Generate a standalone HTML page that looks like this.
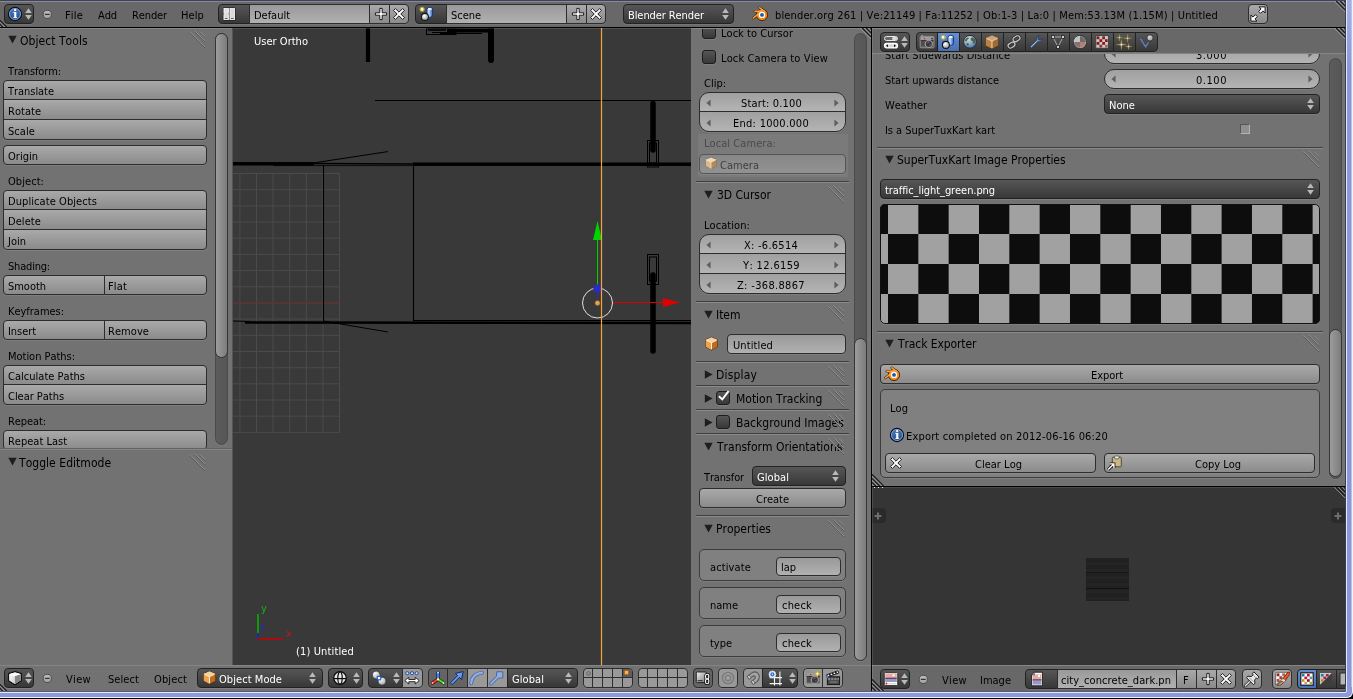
<!DOCTYPE html>
<html><head><meta charset="utf-8"><title>Blender</title>
<style>
html,body{margin:0;padding:0;background:#727272;overflow:hidden}
#app{position:relative;width:1353px;height:699px;overflow:hidden;background:#727272;-webkit-font-smoothing:antialiased;font-family:"DejaVu Sans Condensed","DejaVu Sans","Liberation Sans",sans-serif;font-size:11px;line-height:14px;font-kerning:none;font-stretch:condensed}
.r,.w,.t,.i,.c{position:absolute;display:block}
.w{border:1px solid #2d2d2d;box-shadow:0 1px 0 rgba(255,255,255,0.09)}
.t{white-space:pre;line-height:14px;height:14px;will-change:transform}
svg text{will-change:transform;font-stretch:normal}
.it{will-change:transform}
.c{overflow:hidden}
.d{letter-spacing:0.71px}

</style></head>
<body>
<div id="app">
<div class="r" style="left:0px;top:0px;width:1353px;height:699px;background:#727272;"></div>
<div class="r" style="left:0px;top:0px;width:1345px;height:1px;background:#3a4068;"></div>
<div class="r" style="left:0px;top:1px;width:1345px;height:1px;background:#8b8b8b;"></div>
<div class="r" style="left:0px;top:2px;width:1345px;height:25px;background:#686868;"></div>
<div class="r" style="left:0px;top:27px;width:1345px;height:1px;background:#000;"></div>
<div class="w" style="left:4px;top:4px;width:28px;height:18px;border-color:#222222;background:linear-gradient(#565656,#383838);border-radius:4px;"></div>
<svg class="i" style="left:7px;top:6px;" width="16" height="16" viewBox="0 0 16 16"><defs><radialGradient id="gi" cx="0.45" cy="0.3" r="0.85"><stop offset="0" stop-color="#4d7ab8"/><stop offset="1" stop-color="#173f80"/></radialGradient></defs>
<circle cx="8" cy="8" r="6.6" fill="url(#gi)" stroke="#0a0e1c" stroke-width="1.1"/><circle cx="8" cy="8" r="5.5" fill="none" stroke="#9dbbe2" stroke-width="0.9" opacity="0.85"/>
<text x="8.1" y="12" text-anchor="middle" font-family="'DejaVu Serif','Liberation Serif',serif" font-weight="bold" font-size="11.5" fill="#fff">i</text></svg>
<svg class="i" style="left:25px;top:8px;" width="7" height="12" viewBox="0 0 7 12"><path d="M3.5 0.3 L6.8 5 H0.2Z M0.2 7 H6.8 L3.5 11.7Z" fill="#b9b9b9"/></svg>
<svg class="i" style="left:39px;top:6px;" width="16" height="16" viewBox="0 0 16 16"><defs><linearGradient id="gmn" x1="0" y1="0" x2="0" y2="1"><stop offset="0" stop-color="#bdbdbd"/><stop offset="1" stop-color="#a2a2a2"/></linearGradient></defs><circle cx="8.3" cy="8.4" r="4.1" fill="url(#gmn)" stroke="#4a4a4a" stroke-width="1"/><rect x="5.9" y="7.8" width="4.8" height="1.2" fill="#333"/></svg>
<span class="t" style="left:65px;top:9px;color:#000;letter-spacing:0.179px;">File</span>
<span class="t" style="left:98px;top:9px;color:#000;letter-spacing:-0.112px;">Add</span>
<span class="t" style="left:132px;top:9px;color:#000;letter-spacing:-0.113px;">Render</span>
<span class="t" style="left:181px;top:9px;color:#000;letter-spacing:0.108px;">Help</span>
<div class="w" style="left:218px;top:4px;width:30px;height:18px;border-color:#222222;background:linear-gradient(#565656,#383838);border-radius:4px 0 0 4px;"></div>
<svg class="i" style="left:222px;top:6px;" width="16" height="16" viewBox="0 0 16 16"><rect x="0.9" y="1.4" width="12.6" height="13.2" rx="1.2" fill="#141414"/><rect x="1.9" y="2.4" width="4.6" height="5" fill="#e2e2e2" stroke="#fff" stroke-width="0.8"/><rect x="1.9" y="8.6" width="4.6" height="5" fill="#dcdcdc" stroke="#fff" stroke-width="0.8"/><rect x="7.9" y="2.4" width="4.6" height="11.2" fill="#dadada" stroke="#fff" stroke-width="0.8"/><rect x="2.8" y="12" width="2.8" height="0.9" fill="#555"/><rect x="8.8" y="12" width="2.8" height="0.9" fill="#555"/></svg>
<div class="w" style="left:249px;top:4px;width:119px;height:18px;border-color:#2d2d2d;background:linear-gradient(#999,#b1b1b1);border-radius:0;"></div>
<span class="t" style="left:254px;top:9px;color:#000;letter-spacing:-0.023px;">Default</span>
<div class="w" style="left:369px;top:4px;width:19px;height:18px;border-color:#2d2d2d;background:linear-gradient(#a9a9a9,#8b8b8b);border-radius:0;"></div>
<svg class="i" style="left:373px;top:6px;" width="16" height="16" viewBox="0 0 16 16"><path d="M6.8 2.4 H9.2 V6.8 H13.6 V9.2 H9.2 V13.6 H6.8 V9.2 H2.4 V6.8 H6.8Z" fill="#fff" stroke="#1a1a1a" stroke-width="1" stroke-linejoin="round"/></svg>
<div class="w" style="left:389px;top:4px;width:18px;height:18px;border-color:#2d2d2d;background:linear-gradient(#a9a9a9,#8b8b8b);border-radius:0 4px 4px 0;"></div>
<svg class="i" style="left:391px;top:6px;" width="16" height="16" viewBox="0 0 16 16"><path d="M2.6 4.4 L4.4 2.6 L8 6.2 L11.6 2.6 L13.4 4.4 L9.8 8 L13.4 11.6 L11.6 13.4 L8 9.8 L4.4 13.4 L2.6 11.6 L6.2 8Z" fill="#fff" stroke="#1a1a1a" stroke-width="1" stroke-linejoin="round"/></svg>
<div class="w" style="left:415px;top:4px;width:30px;height:18px;border-color:#222222;background:linear-gradient(#565656,#383838);border-radius:4px 0 0 4px;"></div>
<svg class="i" style="left:419px;top:6px;" width="16" height="16" viewBox="0 0 16 16"><defs><linearGradient id="gcy" x1="0" x2="1"><stop offset="0" stop-color="#e8f0fc"/><stop offset="0.45" stop-color="#a8c6f2"/><stop offset="1" stop-color="#2f64bc"/></linearGradient><radialGradient id="gsp" cx="0.4" cy="0.35" r="0.75"><stop offset="0" stop-color="#ffffff"/><stop offset="1" stop-color="#8e8e8e"/></radialGradient></defs>
<rect x="8" y="1.3" width="5.6" height="10" rx="2.5" fill="url(#gcy)" stroke="#153a80" stroke-width="1"/><ellipse cx="10.8" cy="3" rx="2.1" ry="1.1" fill="#f6f9ff"/>
<circle cx="5.9" cy="10.9" r="3.5" fill="url(#gsp)" stroke="#141414" stroke-width="1.1"/><circle cx="3.1" cy="3.2" r="2" fill="#fffef0" stroke="#b6a832" stroke-width="1.1"/></svg>
<div class="w" style="left:446px;top:4px;width:119px;height:18px;border-color:#2d2d2d;background:linear-gradient(#999,#b1b1b1);border-radius:0;"></div>
<span class="t" style="left:451px;top:9px;color:#000;letter-spacing:-0.036px;">Scene</span>
<div class="w" style="left:566px;top:4px;width:19px;height:18px;border-color:#2d2d2d;background:linear-gradient(#a9a9a9,#8b8b8b);border-radius:0;"></div>
<svg class="i" style="left:570px;top:6px;" width="16" height="16" viewBox="0 0 16 16"><path d="M6.8 2.4 H9.2 V6.8 H13.6 V9.2 H9.2 V13.6 H6.8 V9.2 H2.4 V6.8 H6.8Z" fill="#fff" stroke="#1a1a1a" stroke-width="1" stroke-linejoin="round"/></svg>
<div class="w" style="left:586px;top:4px;width:18px;height:18px;border-color:#2d2d2d;background:linear-gradient(#a9a9a9,#8b8b8b);border-radius:0 4px 4px 0;"></div>
<svg class="i" style="left:588px;top:6px;" width="16" height="16" viewBox="0 0 16 16"><path d="M2.6 4.4 L4.4 2.6 L8 6.2 L11.6 2.6 L13.4 4.4 L9.8 8 L13.4 11.6 L11.6 13.4 L8 9.8 L4.4 13.4 L2.6 11.6 L6.2 8Z" fill="#fff" stroke="#1a1a1a" stroke-width="1" stroke-linejoin="round"/></svg>
<div class="w" style="left:623px;top:4px;width:109px;height:18px;border-color:#222222;background:linear-gradient(#565656,#383838);border-radius:4px;"></div>
<span class="t" style="left:628px;top:9px;color:#fff;letter-spacing:-0.083px;">Blender Render</span>
<svg class="i" style="left:722px;top:8px;" width="7" height="12" viewBox="0 0 7 12"><path d="M3.5 0.3 L6.8 5 H0.2Z M0.2 7 H6.8 L3.5 11.7Z" fill="#b9b9b9"/></svg>
<svg class="i" style="left:752px;top:6px;" width="16" height="16" viewBox="0 0 16 16"><g stroke="#4a2806" stroke-width="2.6" stroke-linecap="round" fill="none"><path d="M2.9 5.3 H9.2"/><path d="M7.8 1.8 L12.4 5.4"/><path d="M1.2 12 L6.4 8.2"/></g><circle cx="10" cy="8.9" r="5.7" fill="#f48a12" stroke="#4a2806" stroke-width="1"/><g stroke="#fba346" stroke-width="1.5" stroke-linecap="round" fill="none"><path d="M2.9 5.3 H9.2"/><path d="M7.8 1.8 L12.4 5.4"/><path d="M1.2 12 L6.4 8.2"/></g><circle cx="10" cy="8.9" r="3.2" fill="#fff"/><circle cx="10" cy="8.9" r="1.95" fill="#2358a8"/></svg>
<span class="t" style="left:775px;top:9px;color:#000;letter-spacing:0.139px;">blender.org 261 | Ve:21149 | Fa:11252 | Ob:1-3 | La:0 | Mem:53.13M (1.15M) | Untitled</span>
<div class="w" style="left:1248px;top:4px;width:18px;height:18px;border-color:#2d2d2d;background:linear-gradient(#a9a9a9,#8b8b8b);border-radius:4px;"></div>
<svg class="i" style="left:1250px;top:6px;" width="16" height="16" viewBox="0 0 16 16"><path d="M9 0.9 H15.1 V7 L13 4.9 L10.6 7.3 L8.7 5.4 L11.1 3Z" fill="#fff" stroke="#1a1a1a" stroke-width="1" stroke-linejoin="round"/><path d="M0.9 9 V15.1 H7 L4.9 13 L7.3 10.6 L5.4 8.7 L3 11.1Z" fill="#fff" stroke="#1a1a1a" stroke-width="1" stroke-linejoin="round"/></svg>
<div class="r" style="left:0px;top:28px;width:233px;height:1px;background:#878787;"></div>
<svg class="i" style="left:8px;top:35px;" width="9" height="9" viewBox="0 0 9 9"><path d="M0.3 0.8 H8.7 L4.5 8.6Z" fill="#1e1e1e"/></svg>
<span class="t" style="left:20px;top:34px;color:#000;letter-spacing:0.051px;font-size:12px;">Object Tools</span>
<svg class="i" style="left:189px;top:30px;" width="17" height="19" viewBox="0 0 17 19"><path d="M0.5 2.5 L16 18" stroke="#5a5a5a" stroke-width="1"/><path d="M0.5 1.5 L16 17" stroke="#909090" stroke-width="1"/><path d="M5.5 1.5 L16 12" stroke="#5a5a5a" stroke-width="1"/><path d="M5.5 0.5 L16 11" stroke="#909090" stroke-width="1"/><path d="M11 2.5 L16 7.5" stroke="#5a5a5a" stroke-width="1"/><path d="M11 1.5 L16 6.5" stroke="#909090" stroke-width="1"/></svg>
<span class="t" style="left:8px;top:65px;color:#000;letter-spacing:-0.118px;">Transform:</span>
<div class="w" style="left:3px;top:80px;width:202px;height:18px;border-color:#2d2d2d;background:linear-gradient(#a9a9a9,#8b8b8b);border-radius:4px 4px 0 0;"></div>
<span class="t" style="left:8px;top:85px;color:#000;letter-spacing:-0.043px;">Translate</span>
<div class="w" style="left:3px;top:99px;width:202px;height:19px;border-color:#2d2d2d;background:linear-gradient(#a9a9a9,#8b8b8b);border-radius:0;"></div>
<span class="t" style="left:8px;top:105px;color:#000;letter-spacing:0.027px;">Rotate</span>
<div class="w" style="left:3px;top:119px;width:202px;height:19px;border-color:#2d2d2d;background:linear-gradient(#a9a9a9,#8b8b8b);border-radius:0 0 4px 4px;"></div>
<span class="t" style="left:8px;top:125px;color:#000;letter-spacing:0.074px;">Scale</span>
<div class="w" style="left:3px;top:145px;width:202px;height:18px;border-color:#2d2d2d;background:linear-gradient(#a9a9a9,#8b8b8b);border-radius:4px;"></div>
<span class="t" style="left:8px;top:150px;color:#000;letter-spacing:0.015px;">Origin</span>
<span class="t" style="left:8px;top:175px;color:#000;letter-spacing:0.062px;">Object:</span>
<div class="w" style="left:3px;top:190px;width:202px;height:18px;border-color:#2d2d2d;background:linear-gradient(#a9a9a9,#8b8b8b);border-radius:4px 4px 0 0;"></div>
<span class="t" style="left:8px;top:195px;color:#000;letter-spacing:0.077px;">Duplicate Objects</span>
<div class="w" style="left:3px;top:209px;width:202px;height:19px;border-color:#2d2d2d;background:linear-gradient(#a9a9a9,#8b8b8b);border-radius:0;"></div>
<span class="t" style="left:8px;top:215px;color:#000;letter-spacing:0.080px;">Delete</span>
<div class="w" style="left:3px;top:229px;width:202px;height:19px;border-color:#2d2d2d;background:linear-gradient(#a9a9a9,#8b8b8b);border-radius:0 0 4px 4px;"></div>
<span class="t" style="left:8px;top:235px;color:#000;letter-spacing:0.002px;">Join</span>
<span class="t" style="left:8px;top:260px;color:#000;letter-spacing:-0.194px;">Shading:</span>
<div class="w" style="left:3px;top:275px;width:100px;height:18px;border-color:#2d2d2d;background:linear-gradient(#a9a9a9,#8b8b8b);border-radius:4px 0 0 4px;"></div>
<span class="t" style="left:8px;top:280px;color:#000;letter-spacing:-0.031px;">Smooth</span>
<div class="w" style="left:104px;top:275px;width:101px;height:18px;border-color:#2d2d2d;background:linear-gradient(#a9a9a9,#8b8b8b);border-radius:0 4px 4px 0;"></div>
<span class="t" style="left:108px;top:280px;color:#000;letter-spacing:0.154px;">Flat</span>
<span class="t" style="left:8px;top:305px;color:#000;letter-spacing:-0.027px;">Keyframes:</span>
<div class="w" style="left:3px;top:320px;width:100px;height:18px;border-color:#2d2d2d;background:linear-gradient(#a9a9a9,#8b8b8b);border-radius:4px 0 0 4px;"></div>
<span class="t" style="left:8px;top:325px;color:#000;letter-spacing:-0.063px;">Insert</span>
<div class="w" style="left:104px;top:320px;width:101px;height:18px;border-color:#2d2d2d;background:linear-gradient(#a9a9a9,#8b8b8b);border-radius:0 4px 4px 0;"></div>
<span class="t" style="left:108px;top:325px;color:#000;letter-spacing:0.066px;">Remove</span>
<span class="t" style="left:8px;top:350px;color:#000;letter-spacing:-0.028px;">Motion Paths:</span>
<div class="w" style="left:3px;top:365px;width:202px;height:18px;border-color:#2d2d2d;background:linear-gradient(#a9a9a9,#8b8b8b);border-radius:4px 4px 0 0;"></div>
<span class="t" style="left:8px;top:370px;color:#000;letter-spacing:0.020px;">Calculate Paths</span>
<div class="w" style="left:3px;top:384px;width:202px;height:19px;border-color:#2d2d2d;background:linear-gradient(#a9a9a9,#8b8b8b);border-radius:0 0 4px 4px;"></div>
<span class="t" style="left:8px;top:390px;color:#000;letter-spacing:-0.033px;">Clear Paths</span>
<span class="t" style="left:8px;top:415px;color:#000;letter-spacing:-0.088px;">Repeat:</span>
<div class="w" style="left:3px;top:430px;width:202px;height:18px;border-color:#2d2d2d;background:linear-gradient(#a9a9a9,#8b8b8b);border-radius:4px;"></div>
<span class="t" style="left:8px;top:435px;color:#000;letter-spacing:-0.003px;">Repeat Last</span>
<div class="r" style="left:215px;top:33px;width:11px;height:410px;border:1px solid #4a4a4a;border-radius:6.5px;background:linear-gradient(90deg,#5c5c5c,#565656);box-shadow:0 1px 0 rgba(255,255,255,0.08)"></div>
<div class="r" style="left:215px;top:33px;width:11px;height:323px;border:1px solid #353535;border-radius:6.5px;background:linear-gradient(90deg,#9c9c9c,#7c7c7c)"></div>
<div class="r" style="left:0px;top:448px;width:232px;height:251px;background:#727272;"></div>
<div class="r" style="left:0px;top:448px;width:232px;height:1px;background:#636363;"></div>
<div class="r" style="left:0px;top:449px;width:232px;height:1px;background:#858585;"></div>
<svg class="i" style="left:8px;top:457px;" width="9" height="9" viewBox="0 0 9 9"><path d="M0.3 0.8 H8.7 L4.5 8.6Z" fill="#1e1e1e"/></svg>
<span class="t" style="left:19px;top:456px;color:#000;letter-spacing:0.041px;font-size:12px;">Toggle Editmode</span>
<svg class="i" style="left:189px;top:453px;" width="17" height="19" viewBox="0 0 17 19"><path d="M0.5 2.5 L16 18" stroke="#5a5a5a" stroke-width="1"/><path d="M0.5 1.5 L16 17" stroke="#909090" stroke-width="1"/><path d="M5.5 1.5 L16 12" stroke="#5a5a5a" stroke-width="1"/><path d="M5.5 0.5 L16 11" stroke="#909090" stroke-width="1"/><path d="M11 2.5 L16 7.5" stroke="#5a5a5a" stroke-width="1"/><path d="M11 1.5 L16 6.5" stroke="#909090" stroke-width="1"/></svg>
<div class="c" style="left:233px;top:28px;width:458px;height:637px;background:#393939">
<svg class="i" style="left:0;top:0" width="458" height="637" viewBox="0 0 458 637"><path d="M106.5 145.5 V404.4 M89.9 145.5 V404.4 M73.3 145.5 V404.4 M56.7 145.5 V404.4 M40.1 145.5 V404.4 M23.5 145.5 V404.4 M6.9 145.5 V404.4 M0 145.5 H106.5 M0 161.7 H106.5 M0 177.9 H106.5 M0 194.0 H106.5 M0 210.2 H106.5 M0 226.4 H106.5 M0 242.6 H106.5 M0 258.8 H106.5 M0 274.9 H106.5 M0 291.1 H106.5 M0 307.3 H106.5 M0 323.5 H106.5 M0 339.7 H106.5 M0 355.8 H106.5 M0 372.0 H106.5 M0 388.2 H106.5 M0 404.4 H106.5 " stroke="#4b4b4b" stroke-width="1" fill="none"/><path d="M0 274.5 H106.5" stroke="#6e2a2a" stroke-width="1"/><path d="M135.0 0.0 L135.0 34.0" stroke="#000" stroke-width="4.2" stroke-linecap="butt" fill="none"/><path d="M214.0 2.3 L261.0 2.3" stroke="#000" stroke-width="4.2" stroke-linecap="butt" fill="none"/><path d="M258.0 0.0 L258.0 32.0" stroke="#000" stroke-width="6" stroke-linecap="round" fill="none"/><rect x="193.5" y="0.5" width="29.5" height="6" fill="none" stroke="#000" stroke-width="1"/><path d="M195.0 2.0 L213.0 2.0" stroke="#000" stroke-width="1.6" stroke-linecap="butt" fill="none"/><path d="M199.0 4.5 L223.0 4.5" stroke="#000" stroke-width="1" stroke-linecap="butt" fill="none"/><path d="M207.0 5.5 L249.0 5.5" stroke="#000" stroke-width="1" stroke-linecap="butt" fill="none"/><path d="M142.0 72.5 L458.0 72.5" stroke="#000" stroke-width="1" stroke-linecap="butt" fill="none"/><path d="M0.0 135.7 L81.0 135.7" stroke="#000" stroke-width="3.4" stroke-linecap="butt" fill="none"/><path d="M81.0 135.6 L181.0 136.0" stroke="#000" stroke-width="1.5" stroke-linecap="butt" fill="none"/><path d="M180.0 136.3 L458.0 136.3" stroke="#000" stroke-width="3.4" stroke-linecap="butt" fill="none"/><path d="M40.0 137.6 L181.0 137.6" stroke="#000" stroke-width="0.8" stroke-linecap="butt" fill="none"/><path d="M80.0 135.0 L155.0 123.6" stroke="#000" stroke-width="1" stroke-linecap="butt" fill="none"/><path d="M90.5 137.0 L90.5 293.0" stroke="#000" stroke-width="1.1" stroke-linecap="butt" fill="none"/><path d="M180.5 137.0 L180.5 293.0" stroke="#000" stroke-width="1.1" stroke-linecap="butt" fill="none"/><path d="M180.0 292.5 L458.0 292.5" stroke="#000" stroke-width="1" stroke-linecap="butt" fill="none"/><path d="M0.0 293.0 L17.0 293.5" stroke="#000" stroke-width="1" stroke-linecap="butt" fill="none"/><path d="M12.0 294.5 L458.0 295.0" stroke="#000" stroke-width="2.5" stroke-linecap="butt" fill="none"/><path d="M90.0 293.0 L155.0 304.0" stroke="#000" stroke-width="1" stroke-linecap="butt" fill="none"/><path d="M420.0 75.5 L420.0 122.0" stroke="#000" stroke-width="5.5" stroke-linecap="round" fill="none"/><rect x="414.5" y="112.5" width="11" height="26.5" fill="none" stroke="#000" stroke-width="1"/><rect x="416.5" y="115" width="7" height="20" fill="none" stroke="#000" stroke-width="1"/><path d="M420.0 247.0 L420.0 323.0" stroke="#000" stroke-width="5.5" stroke-linecap="round" fill="none"/><rect x="414.5" y="226.5" width="11" height="30" fill="none" stroke="#000" stroke-width="1"/><rect x="416.5" y="229" width="7" height="24" fill="none" stroke="#000" stroke-width="1"/><path d="M364.5 211.0 L364.5 260.0" stroke="#00d400" stroke-width="1" stroke-linecap="butt" fill="none"/><path d="M364.5 193 L369 212 H360Z" fill="#00d400"/><path d="M379.0 274.5 L431.0 274.5" stroke="#e00000" stroke-width="1" stroke-linecap="butt" fill="none"/><path d="M447 274.5 L430 270 V279Z" fill="#e00000"/><circle cx="364.5" cy="275" r="15" fill="none" stroke="#f0f0f0" stroke-width="0.9"/><path d="M364.5 262.0 L364.5 272.0" stroke="#2a2ab0" stroke-width="1" stroke-linecap="butt" fill="none"/><circle cx="364.5" cy="260.6" r="4.2" fill="#2a2ac8"/><circle cx="364.5" cy="275" r="2.6" fill="#e8a050" stroke="#6a4a1a" stroke-width="0.6"/><path d="M368.5 0.0 L368.5 637.0" stroke="#f5a23c" stroke-width="1.2" stroke-linecap="butt" fill="none"/><path d="M25.0 586.0 L25.0 605.0" stroke="#00b400" stroke-width="1.6" stroke-linecap="butt" fill="none"/><path d="M25.0 605.0 L25.0 611.0" stroke="#2020c0" stroke-width="1.6" stroke-linecap="butt" fill="none"/><path d="M25.0 610.8 L50.0 610.8" stroke="#c80000" stroke-width="1.6" stroke-linecap="butt" fill="none"/></svg>
<div class="r" style="left:0;top:0;width:458px;height:1px;background:rgba(255,255,255,0.13)"></div>
</div>
<div class="r" style="left:232px;top:28px;width:1px;height:637px;background:#545454;"></div>
<div class="r" style="left:691px;top:29px;width:1px;height:636px;background:#7f7f7f;"></div>
<span class="t" style="left:254px;top:35px;color:#fff;letter-spacing:0.024px;">User Ortho</span>
<span class="t" style="left:296px;top:645px;color:#fff;letter-spacing:0.141px;">(1) Untitled</span>
<span class="t" style="left:261px;top:602px;color:#14b414;letter-spacing:0.146px;">y</span>
<span class="t" style="left:260px;top:621px;color:#2a2ad0;letter-spacing:-0.194px;">z</span>
<span class="t" style="left:286px;top:627px;color:#c01818;letter-spacing:0.146px;">x</span>
<div class="r" style="left:691px;top:28px;width:180px;height:637px;background:#727272;"></div>
<div class="r" style="left:691px;top:28px;width:180px;height:1px;background:#878787;"></div>
<div class="c" style="left:691px;top:29px;width:180px;height:636px;">
<div class="w" style="left:11px;top:-4px;width:12px;height:12px;border-color:#1c1c1c;background:linear-gradient(#565656,#383838);border-radius:3px;"></div>
<span class="t" style="left:30px;top:-2px;color:#000;letter-spacing:0.037px;">Lock to Cursor</span>
<div class="w" style="left:11px;top:21px;width:12px;height:12px;border-color:#1c1c1c;background:linear-gradient(#565656,#383838);border-radius:3px;"></div>
<span class="t" style="left:30px;top:23px;color:#000;letter-spacing:0.125px;">Lock Camera to View</span>
<span class="t" style="left:13px;top:48px;color:#000;letter-spacing:-0.006px;">Clip:</span>
<div class="w" style="left:8px;top:63px;width:145px;height:18px;border-color:#2d2d2d;background:linear-gradient(#a0a0a0,#b4b4b4);border-radius:10px 10px 0 0;"></div>
<span class="t" style="left:50px;top:68px;color:#000;letter-spacing:0.169px;">Start: 0.100</span>
<svg class="i" style="left:15px;top:69.5px;" width="5" height="8" viewBox="0 0 5 8"><path d="M4.6 0.4 V7.6 L0.4 4Z" fill="#5f5f5f"/></svg>
<svg class="i" style="left:143px;top:69.5px;" width="5" height="8" viewBox="0 0 5 8"><path d="M0.4 0.4 V7.6 L4.6 4Z" fill="#5f5f5f"/></svg>
<div class="w" style="left:8px;top:82px;width:145px;height:19px;border-color:#2d2d2d;background:linear-gradient(#a0a0a0,#b4b4b4);border-radius:0 0 10px 10px;"></div>
<span class="t" style="left:42px;top:88px;color:#000;letter-spacing:0.270px;">End: 1000.000</span>
<svg class="i" style="left:15px;top:89.5px;" width="5" height="8" viewBox="0 0 5 8"><path d="M4.6 0.4 V7.6 L0.4 4Z" fill="#5f5f5f"/></svg>
<svg class="i" style="left:143px;top:89.5px;" width="5" height="8" viewBox="0 0 5 8"><path d="M0.4 0.4 V7.6 L4.6 4Z" fill="#5f5f5f"/></svg>
<div class="r" style="left:7px;top:105px;width:150px;height:43px;background:#7a7a7a;"></div>
<span class="t" style="left:13px;top:108px;color:#4a4a4a;letter-spacing:0.067px;">Local Camera:</span>
<div class="w" style="left:8px;top:125px;width:145px;height:18px;border-color:#555555;background:linear-gradient(#878787,#929292);border-radius:4px;"></div>
<svg class="i" style="left:13px;top:127px;" width="14" height="14" viewBox="0 0 16 16"><path d="M8 1.6 L14 4.2 V11.3 L8 14.5 L2 11.3 V4.2Z" fill="#c8a070" stroke="#6a5a40" stroke-width="0.8" stroke-linejoin="round"/><path d="M8 1.6 L14 4.2 L8 7 L2 4.2Z" fill="#ead9bf"/><path d="M2 4.2 L8 7 V14.5 L2 11.3Z" fill="#dcb98a"/><path d="M8 7 L14 4.2 V11.3 L8 14.5Z" fill="#b48a55"/><path d="M2 4.2 L8 7 L14 4.2 M8 7 V14.5" stroke="#f1e8d8" stroke-width="0.8" fill="none"/></svg>
<span class="t" style="left:29px;top:130px;color:#3f3f3f;letter-spacing:0.027px;">Camera</span>
<div class="r" style="left:5px;top:152px;width:153px;height:1px;background:#3f3f3f;"></div>
<div class="r" style="left:5px;top:153px;width:153px;height:1px;background:#8a8a8a;"></div>
<svg class="i" style="left:13px;top:161px;" width="9" height="9" viewBox="0 0 9 9"><path d="M0.3 0.8 H8.7 L4.5 8.6Z" fill="#1e1e1e"/></svg>
<span class="t" style="left:26px;top:159px;color:#000;letter-spacing:-0.022px;font-size:12px;">3D Cursor</span>
<svg class="i" style="left:137px;top:156px;" width="17" height="19" viewBox="0 0 17 19"><path d="M0.5 2.5 L16 18" stroke="#5a5a5a" stroke-width="1"/><path d="M0.5 1.5 L16 17" stroke="#909090" stroke-width="1"/><path d="M5.5 1.5 L16 12" stroke="#5a5a5a" stroke-width="1"/><path d="M5.5 0.5 L16 11" stroke="#909090" stroke-width="1"/><path d="M11 2.5 L16 7.5" stroke="#5a5a5a" stroke-width="1"/><path d="M11 1.5 L16 6.5" stroke="#909090" stroke-width="1"/></svg>
<span class="t" style="left:13px;top:190px;color:#000;letter-spacing:0.071px;">Location:</span>
<div class="w" style="left:8px;top:205px;width:145px;height:18px;border-color:#2d2d2d;background:linear-gradient(#a0a0a0,#b4b4b4);border-radius:10px 10px 0 0;"></div>
<span class="t" style="left:53px;top:210px;color:#000;letter-spacing:0.256px;">X: -6.6514</span>
<svg class="i" style="left:15px;top:211.5px;" width="5" height="8" viewBox="0 0 5 8"><path d="M4.6 0.4 V7.6 L0.4 4Z" fill="#5f5f5f"/></svg>
<svg class="i" style="left:143px;top:211.5px;" width="5" height="8" viewBox="0 0 5 8"><path d="M0.4 0.4 V7.6 L4.6 4Z" fill="#5f5f5f"/></svg>
<div class="w" style="left:8px;top:224px;width:145px;height:19px;border-color:#2d2d2d;background:linear-gradient(#a0a0a0,#b4b4b4);border-radius:0;"></div>
<span class="t" style="left:52px;top:230px;color:#000;letter-spacing:0.357px;">Y: 12.6159</span>
<svg class="i" style="left:15px;top:231.5px;" width="5" height="8" viewBox="0 0 5 8"><path d="M4.6 0.4 V7.6 L0.4 4Z" fill="#5f5f5f"/></svg>
<svg class="i" style="left:143px;top:231.5px;" width="5" height="8" viewBox="0 0 5 8"><path d="M0.4 0.4 V7.6 L4.6 4Z" fill="#5f5f5f"/></svg>
<div class="w" style="left:8px;top:244px;width:145px;height:19px;border-color:#2d2d2d;background:linear-gradient(#a0a0a0,#b4b4b4);border-radius:0 0 10px 10px;"></div>
<span class="t" style="left:46px;top:250px;color:#000;letter-spacing:0.330px;">Z: -368.8867</span>
<svg class="i" style="left:15px;top:251.5px;" width="5" height="8" viewBox="0 0 5 8"><path d="M4.6 0.4 V7.6 L0.4 4Z" fill="#5f5f5f"/></svg>
<svg class="i" style="left:143px;top:251.5px;" width="5" height="8" viewBox="0 0 5 8"><path d="M0.4 0.4 V7.6 L4.6 4Z" fill="#5f5f5f"/></svg>
<div class="r" style="left:5px;top:272px;width:153px;height:1px;background:#3f3f3f;"></div>
<div class="r" style="left:5px;top:273px;width:153px;height:1px;background:#8a8a8a;"></div>
<svg class="i" style="left:13px;top:281px;" width="9" height="9" viewBox="0 0 9 9"><path d="M0.3 0.8 H8.7 L4.5 8.6Z" fill="#1e1e1e"/></svg>
<span class="t" style="left:25px;top:279px;color:#000;letter-spacing:-0.019px;font-size:12px;">Item</span>
<svg class="i" style="left:137px;top:276px;" width="17" height="19" viewBox="0 0 17 19"><path d="M0.5 2.5 L16 18" stroke="#5a5a5a" stroke-width="1"/><path d="M0.5 1.5 L16 17" stroke="#909090" stroke-width="1"/><path d="M5.5 1.5 L16 12" stroke="#5a5a5a" stroke-width="1"/><path d="M5.5 0.5 L16 11" stroke="#909090" stroke-width="1"/><path d="M11 2.5 L16 7.5" stroke="#5a5a5a" stroke-width="1"/><path d="M11 1.5 L16 6.5" stroke="#909090" stroke-width="1"/></svg>
<svg class="i" style="left:13px;top:307px;" width="15" height="15" viewBox="0 0 16 16"><path d="M8 1.3 L14.2 4 V11.5 L8 14.8 L1.8 11.5 V4Z" fill="#e2903a" stroke="#3c2208" stroke-width="1" stroke-linejoin="round"/><path d="M8 1.3 L14.2 4 L8 6.9 L1.8 4Z" fill="#f6cf9c"/><path d="M1.8 4 L8 6.9 V14.8 L1.8 11.5Z" fill="#eca24e"/><path d="M8 6.9 L14.2 4 V11.5 L8 14.8Z" fill="#bf6c1c"/><path d="M2.5 4.5 L8 7.1 L13.5 4.5 M8 7.1 V14" stroke="#fff8ec" stroke-width="1" fill="none"/></svg>
<div class="w" style="left:36px;top:305px;width:117px;height:18px;border-color:#2d2d2d;background:linear-gradient(#999,#b1b1b1);border-radius:4px;"></div>
<span class="t" style="left:42px;top:310px;color:#000;letter-spacing:0.106px;">Untitled</span>
<div class="r" style="left:5px;top:332px;width:153px;height:1px;background:#3f3f3f;"></div>
<div class="r" style="left:5px;top:333px;width:153px;height:1px;background:#8a8a8a;"></div>
<svg class="i" style="left:13px;top:341px;" width="9" height="9" viewBox="0 0 9 9"><path d="M0.8 0.3 V8.7 L8.6 4.5Z" fill="#1e1e1e"/></svg>
<span class="t" style="left:25px;top:339px;color:#000;letter-spacing:0.195px;font-size:12px;">Display</span>
<svg class="i" style="left:137px;top:336px;" width="17" height="19" viewBox="0 0 17 19"><path d="M0.5 2.5 L16 18" stroke="#5a5a5a" stroke-width="1"/><path d="M0.5 1.5 L16 17" stroke="#909090" stroke-width="1"/><path d="M5.5 1.5 L16 12" stroke="#5a5a5a" stroke-width="1"/><path d="M5.5 0.5 L16 11" stroke="#909090" stroke-width="1"/><path d="M11 2.5 L16 7.5" stroke="#5a5a5a" stroke-width="1"/><path d="M11 1.5 L16 6.5" stroke="#909090" stroke-width="1"/></svg>
<div class="r" style="left:5px;top:356px;width:153px;height:1px;background:#3f3f3f;"></div>
<div class="r" style="left:5px;top:357px;width:153px;height:1px;background:#8a8a8a;"></div>
<svg class="i" style="left:13px;top:365px;" width="9" height="9" viewBox="0 0 9 9"><path d="M0.8 0.3 V8.7 L8.6 4.5Z" fill="#1e1e1e"/></svg>
<div class="w" style="left:25px;top:362px;width:12px;height:12px;border-color:#1c1c1c;background:linear-gradient(#565656,#383838);border-radius:3px;"></div>
<svg class="i" style="left:25px;top:360px;" width="16" height="16" viewBox="0 0 16 16"><path d="M2.9 7.2 L6.3 10.4 L12.6 2.2" fill="none" stroke="#fff" stroke-width="1.9" stroke-linecap="butt"/></svg>
<span class="t" style="left:45px;top:363px;color:#000;letter-spacing:-0.021px;font-size:12px;">Motion Tracking</span>
<svg class="i" style="left:137px;top:360px;" width="17" height="19" viewBox="0 0 17 19"><path d="M0.5 2.5 L16 18" stroke="#5a5a5a" stroke-width="1"/><path d="M0.5 1.5 L16 17" stroke="#909090" stroke-width="1"/><path d="M5.5 1.5 L16 12" stroke="#5a5a5a" stroke-width="1"/><path d="M5.5 0.5 L16 11" stroke="#909090" stroke-width="1"/><path d="M11 2.5 L16 7.5" stroke="#5a5a5a" stroke-width="1"/><path d="M11 1.5 L16 6.5" stroke="#909090" stroke-width="1"/></svg>
<div class="r" style="left:5px;top:380px;width:153px;height:1px;background:#3f3f3f;"></div>
<div class="r" style="left:5px;top:381px;width:153px;height:1px;background:#8a8a8a;"></div>
<svg class="i" style="left:13px;top:389px;" width="9" height="9" viewBox="0 0 9 9"><path d="M0.8 0.3 V8.7 L8.6 4.5Z" fill="#1e1e1e"/></svg>
<div class="w" style="left:25px;top:386px;width:12px;height:12px;border-color:#1c1c1c;background:linear-gradient(#565656,#383838);border-radius:3px;"></div>
<span class="t" style="left:45px;top:387px;color:#000;letter-spacing:0.017px;font-size:12px;">Background Images</span>
<svg class="i" style="left:137px;top:384px;" width="17" height="19" viewBox="0 0 17 19"><path d="M0.5 2.5 L16 18" stroke="#5a5a5a" stroke-width="1"/><path d="M0.5 1.5 L16 17" stroke="#909090" stroke-width="1"/><path d="M5.5 1.5 L16 12" stroke="#5a5a5a" stroke-width="1"/><path d="M5.5 0.5 L16 11" stroke="#909090" stroke-width="1"/><path d="M11 2.5 L16 7.5" stroke="#5a5a5a" stroke-width="1"/><path d="M11 1.5 L16 6.5" stroke="#909090" stroke-width="1"/></svg>
<div class="r" style="left:5px;top:404px;width:153px;height:1px;background:#3f3f3f;"></div>
<div class="r" style="left:5px;top:405px;width:153px;height:1px;background:#8a8a8a;"></div>
<svg class="i" style="left:13px;top:413px;" width="9" height="9" viewBox="0 0 9 9"><path d="M0.3 0.8 H8.7 L4.5 8.6Z" fill="#1e1e1e"/></svg>
<span class="t" style="left:26px;top:411px;color:#000;letter-spacing:-0.001px;font-size:12px;">Transform Orientations</span>
<svg class="i" style="left:137px;top:408px;" width="17" height="19" viewBox="0 0 17 19"><path d="M0.5 2.5 L16 18" stroke="#5a5a5a" stroke-width="1"/><path d="M0.5 1.5 L16 17" stroke="#909090" stroke-width="1"/><path d="M5.5 1.5 L16 12" stroke="#5a5a5a" stroke-width="1"/><path d="M5.5 0.5 L16 11" stroke="#909090" stroke-width="1"/><path d="M11 2.5 L16 7.5" stroke="#5a5a5a" stroke-width="1"/><path d="M11 1.5 L16 6.5" stroke="#909090" stroke-width="1"/></svg>
<span class="t" style="left:13px;top:442px;color:#000;letter-spacing:-0.150px;">Transfor</span>
<div class="w" style="left:61px;top:437px;width:92px;height:18px;border-color:#222222;background:linear-gradient(#565656,#383838);border-radius:4px;"></div>
<span class="t" style="left:66px;top:442px;color:#fff;letter-spacing:0.071px;">Global</span>
<svg class="i" style="left:141px;top:441px;" width="7" height="12" viewBox="0 0 7 12"><path d="M3.5 0.3 L6.8 5 H0.2Z M0.2 7 H6.8 L3.5 11.7Z" fill="#b9b9b9"/></svg>
<div class="w" style="left:8px;top:459px;width:145px;height:18px;border-color:#2d2d2d;background:linear-gradient(#a9a9a9,#8b8b8b);border-radius:4px;"></div>
<span class="t" style="left:65px;top:464px;color:#000;letter-spacing:-0.017px;">Create</span>
<div class="r" style="left:5px;top:486px;width:153px;height:1px;background:#3f3f3f;"></div>
<div class="r" style="left:5px;top:487px;width:153px;height:1px;background:#8a8a8a;"></div>
<svg class="i" style="left:13px;top:495px;" width="9" height="9" viewBox="0 0 9 9"><path d="M0.3 0.8 H8.7 L4.5 8.6Z" fill="#1e1e1e"/></svg>
<span class="t" style="left:25px;top:493px;color:#000;letter-spacing:-0.010px;font-size:12px;">Properties</span>
<svg class="i" style="left:137px;top:490px;" width="17" height="19" viewBox="0 0 17 19"><path d="M0.5 2.5 L16 18" stroke="#5a5a5a" stroke-width="1"/><path d="M0.5 1.5 L16 17" stroke="#909090" stroke-width="1"/><path d="M5.5 1.5 L16 12" stroke="#5a5a5a" stroke-width="1"/><path d="M5.5 0.5 L16 11" stroke="#909090" stroke-width="1"/><path d="M11 2.5 L16 7.5" stroke="#5a5a5a" stroke-width="1"/><path d="M11 1.5 L16 6.5" stroke="#909090" stroke-width="1"/></svg>
<div class="w" style="left:8px;top:520px;width:145px;height:30px;border-color:#3c3c3c;background:#808080;border-radius:5px;"></div>
<span class="t" style="left:19px;top:532px;color:#000;letter-spacing:0.122px;">activate</span>
<div class="w" style="left:85px;top:528px;width:63px;height:17px;border-color:#2d2d2d;background:linear-gradient(#999,#b1b1b1);border-radius:4px;"></div>
<span class="t" style="left:90px;top:532px;color:#000;letter-spacing:-0.033px;">lap</span>
<div class="w" style="left:8px;top:558px;width:145px;height:30px;border-color:#3c3c3c;background:#808080;border-radius:5px;"></div>
<span class="t" style="left:19px;top:570px;color:#000;letter-spacing:-0.017px;">name</span>
<div class="w" style="left:85px;top:566px;width:63px;height:17px;border-color:#2d2d2d;background:linear-gradient(#999,#b1b1b1);border-radius:4px;"></div>
<span class="t" style="left:91px;top:570px;color:#000;letter-spacing:0.205px;">check</span>
<div class="w" style="left:8px;top:596px;width:145px;height:30px;border-color:#3c3c3c;background:#808080;border-radius:5px;"></div>
<span class="t" style="left:19px;top:608px;color:#000;letter-spacing:-0.027px;">type</span>
<div class="w" style="left:85px;top:604px;width:63px;height:17px;border-color:#2d2d2d;background:linear-gradient(#999,#b1b1b1);border-radius:4px;"></div>
<span class="t" style="left:91px;top:608px;color:#000;letter-spacing:0.205px;">check</span>
</div>
<div class="r" style="left:854px;top:33px;width:11px;height:626px;border:1px solid #4a4a4a;border-radius:6.5px;background:linear-gradient(90deg,#5c5c5c,#565656);box-shadow:0 1px 0 rgba(255,255,255,0.08)"></div>
<div class="r" style="left:854px;top:338px;width:11px;height:321px;border:1px solid #353535;border-radius:6.5px;background:linear-gradient(90deg,#9c9c9c,#7c7c7c)"></div>
<svg class="i" style="left:859px;top:28px;" width="12" height="12" viewBox="0 0 12 12"><path d="M1.2 0 L12 10.8" stroke="#9a9a9a" stroke-width="1.0"/><path d="M3.2 0 L12 8.8" stroke="#1c1c1c" stroke-width="1.2"/><path d="M5.2 0 L12 6.8" stroke="#9a9a9a" stroke-width="1.0"/><path d="M7.2 0 L12 4.8" stroke="#1c1c1c" stroke-width="1.2"/><path d="M9.2 0 L12 2.8000000000000007" stroke="#9a9a9a" stroke-width="1.0"/><path d="M10.8 0 L12 1.1999999999999993" stroke="#1c1c1c" stroke-width="1.0"/></svg>
<div class="r" style="left:0px;top:665px;width:871px;height:1px;background:#858585;"></div>
<div class="r" style="left:0px;top:666px;width:871px;height:25px;background:#727272;"></div>
<div class="w" style="left:4px;top:668px;width:28px;height:18px;border-color:#222222;background:linear-gradient(#565656,#383838);border-radius:4px;"></div>
<svg class="i" style="left:7px;top:670px;" width="16" height="16" viewBox="0 0 16 16"><defs><linearGradient id="gcw" x1="0" y1="0" x2="1" y2="1"><stop offset="0" stop-color="#ffffff"/><stop offset="1" stop-color="#c8c8c8"/></linearGradient></defs><path d="M8 1.6 L14.3 3.6 V10.8 L8 14.8 L1.7 10.8 V3.6Z" fill="#fff" stroke="#0c0c0c" stroke-width="1.3" stroke-linejoin="round"/><path d="M2.4 4.2 L8 6 V14 L2.4 10.4Z" fill="url(#gcw)"/><path d="M8 6 L13.6 4.2 V10.4 L8 14Z" fill="#848484"/><path d="M8 2.4 L13.4 4.1 L8 5.9 L2.6 4.1Z" fill="#fdfdfd"/></svg>
<svg class="i" style="left:25px;top:672px;" width="7" height="12" viewBox="0 0 7 12"><path d="M3.5 0.3 L6.8 5 H0.2Z M0.2 7 H6.8 L3.5 11.7Z" fill="#b9b9b9"/></svg>
<svg class="i" style="left:39px;top:670px;" width="16" height="16" viewBox="0 0 16 16"><defs><linearGradient id="gmn" x1="0" y1="0" x2="0" y2="1"><stop offset="0" stop-color="#bdbdbd"/><stop offset="1" stop-color="#a2a2a2"/></linearGradient></defs><circle cx="8.3" cy="8.4" r="4.1" fill="url(#gmn)" stroke="#4a4a4a" stroke-width="1"/><rect x="5.9" y="7.8" width="4.8" height="1.2" fill="#333"/></svg>
<span class="t" style="left:66px;top:673px;color:#000;letter-spacing:0.324px;">View</span>
<span class="t" style="left:108px;top:673px;color:#000;letter-spacing:0.078px;">Select</span>
<span class="t" style="left:154px;top:673px;color:#000;letter-spacing:0.128px;">Object</span>
<div class="w" style="left:197px;top:668px;width:124px;height:18px;border-color:#222222;background:linear-gradient(#565656,#383838);border-radius:4px;"></div>
<svg class="i" style="left:202px;top:670px;" width="15" height="15" viewBox="0 0 16 16"><path d="M8 1.3 L14.2 4 V11.5 L8 14.8 L1.8 11.5 V4Z" fill="#e2903a" stroke="#3c2208" stroke-width="1" stroke-linejoin="round"/><path d="M8 1.3 L14.2 4 L8 6.9 L1.8 4Z" fill="#f6cf9c"/><path d="M1.8 4 L8 6.9 V14.8 L1.8 11.5Z" fill="#eca24e"/><path d="M8 6.9 L14.2 4 V11.5 L8 14.8Z" fill="#bf6c1c"/><path d="M2.5 4.5 L8 7.1 L13.5 4.5 M8 7.1 V14" stroke="#fff8ec" stroke-width="1" fill="none"/></svg>
<span class="t" style="left:219px;top:673px;color:#fff;letter-spacing:0.060px;">Object Mode</span>
<svg class="i" style="left:309px;top:672px;" width="7" height="12" viewBox="0 0 7 12"><path d="M3.5 0.3 L6.8 5 H0.2Z M0.2 7 H6.8 L3.5 11.7Z" fill="#b9b9b9"/></svg>
<div class="w" style="left:328px;top:668px;width:33px;height:18px;border-color:#222222;background:linear-gradient(#565656,#383838);border-radius:4px;"></div>
<svg class="i" style="left:332px;top:670px;" width="16" height="16" viewBox="0 0 16 16"><circle cx="8" cy="8" r="6.3" fill="#e6e6e6" stroke="#0c0c0c" stroke-width="1.3"/><ellipse cx="8" cy="8" rx="2.2" ry="6.1" fill="none" stroke="#0c0c0c" stroke-width="1.2"/><path d="M2 8.6 H14" stroke="#0c0c0c" stroke-width="1.2"/></svg>
<svg class="i" style="left:353px;top:672px;" width="7" height="12" viewBox="0 0 7 12"><path d="M3.5 0.3 L6.8 5 H0.2Z M0.2 7 H6.8 L3.5 11.7Z" fill="#b9b9b9"/></svg>
<div class="w" style="left:368px;top:668px;width:33px;height:18px;border-color:#222222;background:linear-gradient(#565656,#383838);border-radius:4px 0 0 4px;"></div>
<svg class="i" style="left:371px;top:670px;" width="16" height="16" viewBox="0 0 16 16"><defs><radialGradient id="gpv" cx="0.35" cy="0.3" r="0.8"><stop offset="0" stop-color="#fff"/><stop offset="1" stop-color="#9a9a9a"/></radialGradient></defs><circle cx="5.2" cy="5" r="4" fill="url(#gpv)" stroke="#222" stroke-width="0.7"/><circle cx="11" cy="11.2" r="4" fill="url(#gpv)" stroke="#222" stroke-width="0.7"/><rect x="6.3" y="6.4" width="3.4" height="3.4" fill="#fff" stroke="#1b5fd0" stroke-width="1.1"/></svg>
<svg class="i" style="left:393px;top:672px;" width="7" height="12" viewBox="0 0 7 12"><path d="M3.5 0.3 L6.8 5 H0.2Z M0.2 7 H6.8 L3.5 11.7Z" fill="#b9b9b9"/></svg>
<div class="w" style="left:402px;top:668px;width:19px;height:18px;border-color:#2d2d2d;background:#999;border-radius:0 4px 4px 0;"></div>
<svg class="i" style="left:404px;top:670px;" width="16" height="16" viewBox="0 0 16 16"><g fill="#c8d6f0" stroke="#234fa8" stroke-width="1"><circle cx="3.3" cy="3.2" r="1.6"/><circle cx="8" cy="3.2" r="1.6"/><circle cx="12.7" cy="3.2" r="1.6"/></g><path d="M0.8 10.6 L4.8 7.2 V9.5 H11.2 V7.2 L15.2 10.6 L11.2 14 V11.7 H4.8 V14Z" fill="#fff" stroke="#1a1a1a" stroke-width="0.9" stroke-linejoin="round"/></svg>
<div class="w" style="left:428px;top:668px;width:18px;height:18px;border-color:#2d2d2d;background:#646464;border-radius:4px 0 0 4px;"></div>
<svg class="i" style="left:430px;top:670px;" width="16" height="16" viewBox="0 0 16 16"><g stroke-linecap="round" fill="none"><path d="M8 9.3 V2.4" stroke="#0b2468" stroke-width="3.4"/><path d="M8 9.3 L2.4 13" stroke="#5c0a0a" stroke-width="3.4"/><path d="M8 9.3 L13.6 13" stroke="#1a4c0a" stroke-width="3.4"/><path d="M8 9.3 V2.4" stroke="#4c8cf4" stroke-width="1.8"/><path d="M8 9.3 L2.4 13" stroke="#f04a30" stroke-width="1.8"/><path d="M8 9.3 L13.6 13" stroke="#66dc28" stroke-width="1.8"/><path d="M8 2.8 V2.2" stroke="#e4eeff" stroke-width="1.5"/><path d="M2.7 12.8 L2.3 13.1" stroke="#ffd8d0" stroke-width="1.4"/><path d="M13.3 12.8 L13.7 13.1" stroke="#e8ffd0" stroke-width="1.4"/></g><circle cx="8" cy="9.3" r="1.1" fill="#fff8e0"/></svg>
<div class="w" style="left:447px;top:668px;width:19px;height:18px;border-color:#2d2d2d;background:#646464;border-radius:0;"></div>
<svg class="i" style="left:449px;top:670px;" width="16" height="16" viewBox="0 0 16 16"><defs><linearGradient id="gar" x1="0" y1="0" x2="1" y2="1"><stop offset="0" stop-color="#9cc0fa"/><stop offset="1" stop-color="#3a70d8"/></linearGradient></defs><path d="M1.4 12.8 L8.6 5.6 L6.4 3.4 L14.2 1.6 L12.6 9.6 L10.4 7.4 L3.2 14.6Z" fill="url(#gar)" stroke="#0c2868" stroke-width="1" stroke-linejoin="round"/></svg>
<div class="w" style="left:467px;top:668px;width:19px;height:18px;border-color:#2d2d2d;background:#999;border-radius:0;"></div>
<svg class="i" style="left:469px;top:670px;" width="16" height="16" viewBox="0 0 16 16"><path d="M2.2 13.4 Q2.8 4 13 2.6" fill="none" stroke="#4c6aa6" stroke-width="3.8" stroke-linecap="round"/><path d="M2.2 13.4 Q2.8 4 13 2.6" fill="none" stroke="#93afe2" stroke-width="2.1" stroke-linecap="round"/></svg>
<div class="w" style="left:487px;top:668px;width:19px;height:18px;border-color:#2d2d2d;background:#999;border-radius:0;"></div>
<svg class="i" style="left:489px;top:670px;" width="16" height="16" viewBox="0 0 16 16"><path d="M2 13.6 L8.6 7" stroke="#4c6aa6" stroke-width="3.6" stroke-linecap="round"/><rect x="7.6" y="1.8" width="6.2" height="6.2" rx="0.8" fill="#93afe2" stroke="#4c6aa6" stroke-width="1.1"/><path d="M2 13.6 L8.6 7" stroke="#93afe2" stroke-width="1.9" stroke-linecap="round"/></svg>
<div class="w" style="left:507px;top:668px;width:69px;height:18px;border-color:#222222;background:linear-gradient(#565656,#383838);border-radius:0 4px 4px 0;"></div>
<span class="t" style="left:512px;top:673px;color:#fff;letter-spacing:0.071px;">Global</span>
<svg class="i" style="left:565px;top:672px;" width="7" height="12" viewBox="0 0 7 12"><path d="M3.5 0.3 L6.8 5 H0.2Z M0.2 7 H6.8 L3.5 11.7Z" fill="#b9b9b9"/></svg>
<div class="w" style="left:583px;top:668px;width:48px;height:18px;border-color:#2d2d2d;background:#999;border-radius:4px;"></div>
<div class="r" style="left:592px;top:669px;width:1px;height:18px;background:#2d2d2d;"></div>
<div class="r" style="left:602px;top:669px;width:1px;height:18px;background:#2d2d2d;"></div>
<div class="r" style="left:612px;top:669px;width:1px;height:18px;background:#2d2d2d;"></div>
<div class="r" style="left:622px;top:669px;width:1px;height:18px;background:#2d2d2d;"></div>
<div class="r" style="left:584px;top:677px;width:48px;height:1px;background:#2d2d2d;"></div>
<div class="r" style="left:585.5px;top:670.5px;width:5px;height:5px;border-radius:3px;background:#8a8a8a;border:1px solid #6a6a6a;box-sizing:border-box"></div>
<div class="r" style="left:623px;top:669px;width:9px;height:8px;background:#5c5c5c;border-radius:0 3px 0 0"></div>
<div class="r" style="left:624px;top:670px;width:5px;height:5px;border-radius:1.5px;background:#f9b25c;border:1px solid #b96510;box-sizing:border-box"></div>
<div class="w" style="left:638px;top:668px;width:48px;height:18px;border-color:#2d2d2d;background:#999;border-radius:4px;"></div>
<div class="r" style="left:647px;top:669px;width:1px;height:18px;background:#2d2d2d;"></div>
<div class="r" style="left:657px;top:669px;width:1px;height:18px;background:#2d2d2d;"></div>
<div class="r" style="left:667px;top:669px;width:1px;height:18px;background:#2d2d2d;"></div>
<div class="r" style="left:677px;top:669px;width:1px;height:18px;background:#2d2d2d;"></div>
<div class="r" style="left:639px;top:677px;width:48px;height:1px;background:#2d2d2d;"></div>
<div class="w" style="left:693px;top:668px;width:18px;height:18px;border-color:#2d2d2d;background:#646464;border-radius:4px;"></div>
<svg class="i" style="left:695px;top:670px;" width="16" height="16" viewBox="0 0 16 16"><defs><linearGradient id="glk" x1="0" x2="1" y1="0" y2="1"><stop offset="0" stop-color="#f2f2f2"/><stop offset="1" stop-color="#7a7a7a"/></linearGradient></defs><rect x="1.3" y="2" width="10" height="10.6" rx="1" fill="url(#glk)" stroke="#1a1a1a" stroke-width="0.9"/><rect x="2.6" y="10.2" width="5" height="1" fill="#222"/><g fill="none" stroke="#111" stroke-width="2.6"><rect x="10.6" y="4.2" width="3.2" height="5" rx="1.6"/><rect x="10.6" y="8.8" width="3.2" height="5" rx="1.6"/></g><g fill="none" stroke="#fff" stroke-width="1.1"><rect x="10.6" y="4.2" width="3.2" height="5" rx="1.6"/><rect x="10.6" y="8.8" width="3.2" height="5" rx="1.6"/></g></svg>
<div class="w" style="left:718px;top:668px;width:18px;height:18px;border-color:#2d2d2d;background:#999;border-radius:4px;"></div>
<svg class="i" style="left:720px;top:670px;" width="16" height="16" viewBox="0 0 16 16"><circle cx="8" cy="8" r="5.6" fill="none" stroke="#7a7a7a" stroke-width="1.4"/><circle cx="8" cy="8" r="2.6" fill="#a0a0a0" stroke="#7a7a7a" stroke-width="1.1"/></svg>
<div class="w" style="left:743px;top:668px;width:18px;height:18px;border-color:#2d2d2d;background:#999;border-radius:4px 0 0 4px;"></div>
<svg class="i" style="left:745px;top:670px;" width="16" height="16" viewBox="0 0 16 16"><path d="M2.2 6.4 L7.2 2.6 Q11.6 0.6 13.8 4.6 Q15.4 8.6 12 11.6 L8.4 14.4 L6.2 11.6 L9.6 8.8 Q10.8 7.6 10 6.4 Q9 5.4 7.8 6.2 L4.4 9.2Z" fill="#a4a4a4" stroke="#585858" stroke-width="1.1" stroke-linejoin="round"/><path d="M2.2 6.4 L4 5 L6.2 7.8 L4.4 9.2Z M8.4 14.4 L10.2 13 L8 10.2 L6.2 11.6Z" fill="#d2d2d2" stroke="#585858" stroke-width="0.9"/></svg>
<div class="w" style="left:762px;top:668px;width:34px;height:18px;border-color:#222222;background:linear-gradient(#565656,#383838);border-radius:0 4px 4px 0;"></div>
<svg class="i" style="left:766px;top:670px;" width="16" height="16" viewBox="0 0 16 16"><g stroke="#f4f4f4" stroke-width="1.1"><path d="M8.5 3 V15.6 M13.9 1.6 V15.6 M3.6 7.6 H16 M3.6 13.6 H16"/></g><circle cx="6.4" cy="4.4" r="3.4" fill="#fff" stroke="#c8d4ec" stroke-width="0.8"/><circle cx="6.4" cy="4.4" r="2.1" fill="#2c66d0"/><circle cx="6.4" cy="4.4" r="0.8" fill="#cfe0ff"/></svg>
<svg class="i" style="left:788.5px;top:672px;" width="7" height="12" viewBox="0 0 7 12"><path d="M3.5 0.3 L6.8 5 H0.2Z M0.2 7 H6.8 L3.5 11.7Z" fill="#b9b9b9"/></svg>
<div class="w" style="left:803px;top:668px;width:18px;height:18px;border-color:#2d2d2d;background:#999;border-radius:4px 0 0 4px;"></div>
<svg class="i" style="left:805px;top:670px;" width="16" height="16" viewBox="0 0 16 16"><rect x="2" y="1" width="2.2" height="1.6" rx="0.6" fill="#cfcfcf" stroke="#444" stroke-width="0.5"/><rect x="1.2" y="2.4" width="13.8" height="11.4" rx="0.8" fill="#4e4e4e" stroke="#9a9a9a" stroke-width="0.9"/><rect x="1.7" y="2.9" width="12.8" height="3.3" fill="#9c9c9c"/><rect x="1.7" y="6.2" width="12.8" height="0.8" fill="#2c2c2c"/><circle cx="9.8" cy="9.9" r="3.6" fill="#3c3f4a" stroke="#9f9f9f" stroke-width="1.1"/><circle cx="9.8" cy="9.9" r="2" fill="#3a3038"/><path d="M8.4 9 A1.8 1.8 0 0 1 10.5 8.2" stroke="#7c8cb0" stroke-width="0.9" fill="none"/><circle cx="10.7" cy="10.8" r="0.9" fill="#8a4a40"/><rect x="4.9" y="4.1" width="1.3" height="1.2" fill="#e02020"/><rect x="12.2" y="3.9" width="1.6" height="1.5" fill="#2a3a5c"/><rect x="2.2" y="12.6" width="4.8" height="0.7" fill="#8a8a8a"/><path d="M12.4 0.6 L13.3 2.9 L15.6 3.8 L13.3 4.7 L12.4 7 L11.5 4.7 L9.2 3.8 L11.5 2.9Z" fill="#fff7c8" stroke="#c9a21a" stroke-width="0.8"/></svg>
<div class="w" style="left:822px;top:668px;width:19px;height:18px;border-color:#2d2d2d;background:#999;border-radius:0 4px 4px 0;"></div>
<svg class="i" style="left:825px;top:670px;" width="16" height="16" viewBox="0 0 16 16"><rect x="2.4" y="6.8" width="12.2" height="7.8" fill="#4c4c4c" stroke="#151515" stroke-width="1"/><path d="M3 9 H14" stroke="#d8d8d8" stroke-width="0.9" stroke-dasharray="2 1.2"/><path d="M5 12 H12.4" stroke="#8a8a8a" stroke-width="0.9"/><path d="M1.6 4.8 L13 0.8 L13.9 3 L2.5 7Z" fill="#f4f4f4" stroke="#151515" stroke-width="0.9"/><path d="M4.2 3.9 L5.6 6 M7.2 2.8 L8.6 4.9 M10.2 1.8 L11.6 3.8" stroke="#151515" stroke-width="1.5"/><path d="M1.2 5 L2.6 9.2 L3.4 6.6Z" fill="#7ab0f8" stroke="#1b3f8a" stroke-width="0.6"/></svg>
<div class="r" style="left:871px;top:28px;width:1px;height:663px;background:#000;"></div>
<div class="r" style="left:872px;top:28px;width:473px;height:458px;background:#727272;"></div>
<div class="c" style="left:872px;top:54px;width:473px;height:432px;">
<span class="t" style="left:13px;top:-5px;color:#000;letter-spacing:0.008px;">Start Sidewards Distance</span>
<div class="w" style="left:232px;top:-10px;width:214px;height:18px;border-color:#2d2d2d;background:linear-gradient(#a0a0a0,#b4b4b4);border-radius:10px;"></div>
<span class="t" style="left:324px;top:-5px;color:#000;letter-spacing:0.536px;">3.000</span>
<svg class="i" style="left:239px;top:-4px;" width="5" height="8" viewBox="0 0 5 8"><path d="M4.6 0.4 V7.6 L0.4 4Z" fill="#5f5f5f"/></svg>
<svg class="i" style="left:436px;top:-4px;" width="5" height="8" viewBox="0 0 5 8"><path d="M0.4 0.4 V7.6 L4.6 4Z" fill="#5f5f5f"/></svg>
</div>
<div class="r" style="left:872px;top:28px;width:473px;height:1px;background:#858585;"></div>
<div class="r" style="left:872px;top:29px;width:473px;height:24px;background:#686868;"></div>
<div class="r" style="left:872px;top:53px;width:473px;height:1px;background:#858585;"></div>
<div class="w" style="left:880px;top:32px;width:28px;height:18px;border-color:#222222;background:linear-gradient(#565656,#383838);border-radius:4px;"></div>
<svg class="i" style="left:883px;top:34px;" width="16" height="16" viewBox="0 0 16 16"><rect x="1.5" y="2.5" width="13" height="4" rx="2" fill="#6a6a6a" stroke="#e8e8e8" stroke-width="1"/><rect x="9" y="3" width="5" height="3" rx="1.5" fill="#ddd"/><rect x="1.5" y="9.5" width="13" height="4.4" rx="2.2" fill="#d8d8d8" stroke="#fff" stroke-width="1.3"/><path d="M3 11.7 L5 10.2 V13.2Z M13 11.7 L11 10.2 V13.2Z" fill="#111"/></svg>
<svg class="i" style="left:901px;top:36px;" width="7" height="12" viewBox="0 0 7 12"><path d="M3.5 0.3 L6.8 5 H0.2Z M0.2 7 H6.8 L3.5 11.7Z" fill="#b9b9b9"/></svg>
<div class="w" style="left:916px;top:32px;width:20px;height:18px;border-color:#222222;background:linear-gradient(#565656,#383838);border-radius:4px 0 0 4px;"></div>
<svg class="i" style="left:919px;top:34px;" width="16" height="16" viewBox="0 0 16 16"><rect x="2" y="1" width="2.2" height="1.6" rx="0.6" fill="#cfcfcf" stroke="#444" stroke-width="0.5"/><rect x="1.2" y="2.4" width="13.8" height="11.4" rx="0.8" fill="#4e4e4e" stroke="#9a9a9a" stroke-width="0.9"/><rect x="1.7" y="2.9" width="12.8" height="3.3" fill="#9c9c9c"/><rect x="1.7" y="6.2" width="12.8" height="0.8" fill="#2c2c2c"/><circle cx="9.8" cy="9.9" r="3.6" fill="#3c3f4a" stroke="#9f9f9f" stroke-width="1.1"/><circle cx="9.8" cy="9.9" r="2" fill="#3a3038"/><path d="M8.4 9 A1.8 1.8 0 0 1 10.5 8.2" stroke="#7c8cb0" stroke-width="0.9" fill="none"/><circle cx="10.7" cy="10.8" r="0.9" fill="#8a4a40"/><rect x="4.9" y="4.1" width="1.3" height="1.2" fill="#e02020"/><rect x="12.2" y="3.9" width="1.6" height="1.5" fill="#2a3a5c"/><rect x="2.2" y="12.6" width="4.8" height="0.7" fill="#8a8a8a"/></svg>
<div class="w" style="left:937px;top:32px;width:21px;height:18px;border-color:#1c1c1c;background:linear-gradient(#658fd1,#4771b3);border-radius:0;"></div>
<svg class="i" style="left:940px;top:34px;" width="16" height="16" viewBox="0 0 16 16"><defs><linearGradient id="gcy" x1="0" x2="1"><stop offset="0" stop-color="#e8f0fc"/><stop offset="0.45" stop-color="#a8c6f2"/><stop offset="1" stop-color="#2f64bc"/></linearGradient><radialGradient id="gsp" cx="0.4" cy="0.35" r="0.75"><stop offset="0" stop-color="#ffffff"/><stop offset="1" stop-color="#8e8e8e"/></radialGradient></defs>
<rect x="8" y="1.3" width="5.6" height="10" rx="2.5" fill="url(#gcy)" stroke="#153a80" stroke-width="1"/><ellipse cx="10.8" cy="3" rx="2.1" ry="1.1" fill="#f6f9ff"/>
<circle cx="5.9" cy="10.9" r="3.5" fill="url(#gsp)" stroke="#141414" stroke-width="1.1"/><circle cx="3.1" cy="3.2" r="2" fill="#fffef0" stroke="#b6a832" stroke-width="1.1"/></svg>
<div class="w" style="left:959px;top:32px;width:21px;height:18px;border-color:#222222;background:linear-gradient(#565656,#383838);border-radius:0;"></div>
<svg class="i" style="left:962px;top:34px;" width="16" height="16" viewBox="0 0 16 16"><defs><radialGradient id="gw" cx="0.35" cy="0.25" r="0.9"><stop offset="0" stop-color="#d4dde6"/><stop offset="0.5" stop-color="#8ea9c6"/><stop offset="1" stop-color="#2c60a8"/></radialGradient></defs><circle cx="8" cy="7.8" r="6.4" fill="url(#gw)" stroke="#1d2c48" stroke-width="1"/><path d="M3.2 5.4 Q4.4 3.4 6.2 3.2 L7 4.4 L5.6 5.6 L4.4 7.4 L3 7Z M8.6 4.2 L10.8 3.4 L12.6 4.6 L13.4 7.2 L12 9.8 L10.6 9 L11 7.2 L9 6.4Z M4.4 9.2 L6.2 9 L7 10.6 L6 12 L4.6 11Z" fill="#4b5c2a" opacity="0.9"/></svg>
<div class="w" style="left:981px;top:32px;width:21px;height:18px;border-color:#222222;background:linear-gradient(#565656,#383838);border-radius:0;"></div>
<svg class="i" style="left:984px;top:34px;" width="16" height="16" viewBox="0 0 16 16"><path d="M8 1.3 L14.2 4 V11.5 L8 14.8 L1.8 11.5 V4Z" fill="#b67a3c" stroke="#4a2e10" stroke-width="0.9" stroke-linejoin="round"/><path d="M8 1.3 L14.2 4 L8 6.9 L1.8 4Z" fill="#c9a57a"/><path d="M1.8 4 L8 6.9 V14.8 L1.8 11.5Z" fill="#bd8242"/><path d="M8 6.9 L14.2 4 V11.5 L8 14.8Z" fill="#a06a2e"/><path d="M2.4 4.4 L8 7 L13.6 4.4 M8 7 V14" stroke="#e6dccf" stroke-width="0.9" fill="none"/></svg>
<div class="w" style="left:1003px;top:32px;width:21px;height:18px;border-color:#222222;background:linear-gradient(#565656,#383838);border-radius:0;"></div>
<svg class="i" style="left:1006px;top:34px;" width="16" height="16" viewBox="0 0 16 16"><g fill="none" stroke="#2a2a2a" stroke-width="2.6"><rect x="6.9" y="2.4" width="7.2" height="4.6" rx="2.3" transform="rotate(-32 10.5 4.7)"/><rect x="1.9" y="8.8" width="7.2" height="4.6" rx="2.3" transform="rotate(-32 5.5 11.1)"/></g><g fill="none" stroke="#c4c4c4" stroke-width="1.3"><rect x="6.9" y="2.4" width="7.2" height="4.6" rx="2.3" transform="rotate(-32 10.5 4.7)"/><rect x="1.9" y="8.8" width="7.2" height="4.6" rx="2.3" transform="rotate(-32 5.5 11.1)"/></g></svg>
<div class="w" style="left:1025px;top:32px;width:21px;height:18px;border-color:#222222;background:linear-gradient(#565656,#383838);border-radius:0;"></div>
<svg class="i" style="left:1028px;top:34px;" width="16" height="16" viewBox="0 0 16 16"><path d="M11.2 1.6 Q8.6 2 8.4 4.6 Q8.4 5.4 8.8 6 L2.3 12.2 Q1.8 13.6 3.3 14.1 L9.9 7.6 Q10.8 8 11.8 7.8 Q14.3 7.2 14.4 4.6 L12.3 6.2 L10.2 5.6 L9.9 3.6Z" fill="#7c9cd0" stroke="#27385c" stroke-width="0.9" stroke-linejoin="round"/><path d="M3.2 13 L9 7.2" stroke="#b9cdee" stroke-width="0.8"/></svg>
<div class="w" style="left:1047px;top:32px;width:21px;height:18px;border-color:#222222;background:linear-gradient(#565656,#383838);border-radius:0;"></div>
<svg class="i" style="left:1050px;top:34px;" width="16" height="16" viewBox="0 0 16 16"><path d="M3 3 H13 L8 13Z" fill="none" stroke="#a9a9a9" stroke-width="1"/><rect x="1.7" y="1.7" width="2.6" height="2.6" fill="#fff" stroke="#111" stroke-width="0.8"/><rect x="11.7" y="1.7" width="2.6" height="2.6" fill="#fff" stroke="#111" stroke-width="0.8"/><rect x="6.7" y="11.7" width="2.6" height="2.6" fill="#fff" stroke="#111" stroke-width="0.8"/></svg>
<div class="w" style="left:1069px;top:32px;width:21px;height:18px;border-color:#222222;background:linear-gradient(#565656,#383838);border-radius:0;"></div>
<svg class="i" style="left:1072px;top:34px;" width="16" height="16" viewBox="0 0 16 16"><circle cx="8" cy="8" r="6.3" fill="#8a8a8a" stroke="#1e1e1e" stroke-width="1"/><path d="M8 8 V1.7 A6.3 6.3 0 0 0 1.7 8Z" fill="#c2c2c2"/><path d="M8 8 V1.7 A6.3 6.3 0 0 1 14.3 8Z" fill="#6c6c6c"/><path d="M8 8 H14.3 A6.3 6.3 0 0 1 8 14.3Z" fill="#b08078"/><path d="M8 8 V14.3 A6.3 6.3 0 0 1 1.7 8Z" fill="#84726f"/><circle cx="8" cy="8" r="5.6" fill="none" stroke="#e0e0e0" stroke-width="0.5" opacity="0.4"/></svg>
<div class="w" style="left:1091px;top:32px;width:21px;height:18px;border-color:#222222;background:linear-gradient(#565656,#383838);border-radius:0;"></div>
<svg class="i" style="left:1094px;top:34px;" width="16" height="16" viewBox="0 0 16 16"><rect x="1.8" y="1.6" width="12.6" height="12.6" fill="#c9c9c9" stroke="#3a3a3a" stroke-width="0.9"/><g fill="#8a1a12"><rect x="2.6" y="2.4" width="2.8" height="2.8"/><rect x="8.2" y="2.4" width="2.8" height="2.8"/><rect x="5.4" y="5.2" width="2.8" height="2.8"/><rect x="11" y="5.2" width="2.6" height="2.8"/><rect x="2.6" y="8" width="2.8" height="2.8"/><rect x="8.2" y="8" width="2.8" height="2.8"/><rect x="5.4" y="10.8" width="2.8" height="2.6" opacity="0.85"/><rect x="11" y="10.8" width="2.6" height="2.6" opacity="0.6"/></g></svg>
<div class="w" style="left:1113px;top:32px;width:21px;height:18px;border-color:#222222;background:linear-gradient(#565656,#383838);border-radius:0;"></div>
<svg class="i" style="left:1116px;top:34px;" width="16" height="16" viewBox="0 0 16 16"><path d="M3.4 0.20000000000000018 L3.85 3.15 L6.8 3.6 L3.85 4.05 L3.4 7.0 L2.9499999999999997 4.05 L0.0 3.6 L2.9499999999999997 3.15Z M11.6 0.2999999999999998 L12.08 3.82 L15.6 4.3 L12.08 4.779999999999999 L11.6 8.3 L11.12 4.779999999999999 L7.6 4.3 L11.12 3.82Z M5.4 5.6 L6.0 10.0 L10.4 10.6 L6.0 11.2 L5.4 15.6 L4.800000000000001 11.2 L0.40000000000000036 10.6 L4.800000000000001 10.0Z M12.6 9.5 L13.049999999999999 12.05 L15.6 12.5 L13.049999999999999 12.95 L12.6 15.5 L12.15 12.95 L9.6 12.5 L12.15 12.05Z" fill="#f4f4f4" stroke="#8f7d38" stroke-width="0.7"/></svg>
<div class="w" style="left:1135px;top:32px;width:21px;height:18px;border-color:#222222;background:linear-gradient(#565656,#383838);border-radius:0 4px 4px 0;"></div>
<svg class="i" style="left:1138px;top:34px;" width="16" height="16" viewBox="0 0 16 16"><defs><radialGradient id="gp" cx="0.4" cy="0.35" r="0.8"><stop offset="0" stop-color="#d8d8d8"/><stop offset="1" stop-color="#8c8c8c"/></radialGradient></defs><path d="M1.2 4.6 L3.4 4 L7.6 11 L10 7.4 L11.4 8.6 L8 14 L7.2 14Z" fill="#6c86b6" stroke="#33435f" stroke-width="0.7" opacity="0.95"/><circle cx="12" cy="3.9" r="3.2" fill="url(#gp)" stroke="#303030" stroke-width="0.9"/></svg>
<span class="t" style="left:885px;top:74px;color:#000;letter-spacing:-0.028px;">Start upwards distance</span>
<div class="w" style="left:1104px;top:69px;width:214px;height:18px;border-color:#2d2d2d;background:linear-gradient(#a0a0a0,#b4b4b4);border-radius:10px;"></div>
<span class="t" style="left:1196px;top:74px;color:#000;letter-spacing:0.536px;">0.100</span>
<svg class="i" style="left:1111px;top:75px;" width="5" height="8" viewBox="0 0 5 8"><path d="M4.6 0.4 V7.6 L0.4 4Z" fill="#5f5f5f"/></svg>
<svg class="i" style="left:1308px;top:75px;" width="5" height="8" viewBox="0 0 5 8"><path d="M0.4 0.4 V7.6 L4.6 4Z" fill="#5f5f5f"/></svg>
<span class="t" style="left:885px;top:99px;color:#000;letter-spacing:-0.036px;">Weather</span>
<div class="w" style="left:1104px;top:94px;width:214px;height:18px;border-color:#222222;background:linear-gradient(#565656,#383838);border-radius:4px;"></div>
<span class="t" style="left:1109px;top:99px;color:#fff;letter-spacing:0.045px;">None</span>
<svg class="i" style="left:1307px;top:98px;" width="7" height="12" viewBox="0 0 7 12"><path d="M3.5 0.3 L6.8 5 H0.2Z M0.2 7 H6.8 L3.5 11.7Z" fill="#b9b9b9"/></svg>
<span class="t" style="left:885px;top:124px;color:#000;letter-spacing:-0.044px;">Is a SuperTuxKart kart</span>
<div class="r" style="left:1240px;top:124px;width:8px;height:8px;border:1px solid;border-color:#565656 #b2b2b2 #b2b2b2 #565656;background:#8f8f8f"></div>
<div class="r" style="left:877px;top:147px;width:446px;height:1px;background:#3f3f3f;"></div>
<div class="r" style="left:877px;top:148px;width:446px;height:1px;background:#8a8a8a;"></div>
<svg class="i" style="left:885px;top:155px;" width="9" height="9" viewBox="0 0 9 9"><path d="M0.3 0.8 H8.7 L4.5 8.6Z" fill="#1e1e1e"/></svg>
<span class="t" style="left:897px;top:153px;color:#000;letter-spacing:-0.031px;font-size:12px;">SuperTuxKart Image Properties</span>
<svg class="i" style="left:1303px;top:150px;" width="17" height="19" viewBox="0 0 17 19"><path d="M0.5 2.5 L16 18" stroke="#5a5a5a" stroke-width="1"/><path d="M0.5 1.5 L16 17" stroke="#909090" stroke-width="1"/><path d="M5.5 1.5 L16 12" stroke="#5a5a5a" stroke-width="1"/><path d="M5.5 0.5 L16 11" stroke="#909090" stroke-width="1"/><path d="M11 2.5 L16 7.5" stroke="#5a5a5a" stroke-width="1"/><path d="M11 1.5 L16 6.5" stroke="#909090" stroke-width="1"/></svg>
<div class="w" style="left:880px;top:179px;width:438px;height:18px;border-color:#222222;background:linear-gradient(#565656,#383838);border-radius:4px;"></div>
<span class="t" style="left:885px;top:184px;color:#fff;letter-spacing:-0.077px;">traffic_light_green.png</span>
<svg class="i" style="left:1307px;top:183px;" width="7" height="12" viewBox="0 0 7 12"><path d="M3.5 0.3 L6.8 5 H0.2Z M0.2 7 H6.8 L3.5 11.7Z" fill="#b9b9b9"/></svg>
<div class="c" style="left:880px;top:204px;width:440px;height:120px;border-radius:5px;background:#0d0d0d;box-shadow:0 1px 0 rgba(255,255,255,0.09)"><svg class="i" style="left:0;top:0" width="440" height="120" viewBox="0 0 440 120"><rect x="8.00" y="0" width="30.33" height="30" fill="#a1a1a1"/><rect x="68.66" y="0" width="30.33" height="30" fill="#a1a1a1"/><rect x="129.32" y="0" width="30.33" height="30" fill="#a1a1a1"/><rect x="189.98" y="0" width="30.33" height="30" fill="#a1a1a1"/><rect x="250.64" y="0" width="30.33" height="30" fill="#a1a1a1"/><rect x="311.30" y="0" width="30.33" height="30" fill="#a1a1a1"/><rect x="371.96" y="0" width="30.33" height="30" fill="#a1a1a1"/><rect x="432.62" y="0" width="30.33" height="30" fill="#a1a1a1"/><rect x="-22.33" y="30" width="30.33" height="30" fill="#a1a1a1"/><rect x="38.33" y="30" width="30.33" height="30" fill="#a1a1a1"/><rect x="98.99" y="30" width="30.33" height="30" fill="#a1a1a1"/><rect x="159.65" y="30" width="30.33" height="30" fill="#a1a1a1"/><rect x="220.31" y="30" width="30.33" height="30" fill="#a1a1a1"/><rect x="280.97" y="30" width="30.33" height="30" fill="#a1a1a1"/><rect x="341.63" y="30" width="30.33" height="30" fill="#a1a1a1"/><rect x="402.29" y="30" width="30.33" height="30" fill="#a1a1a1"/><rect x="8.00" y="60" width="30.33" height="30" fill="#a1a1a1"/><rect x="68.66" y="60" width="30.33" height="30" fill="#a1a1a1"/><rect x="129.32" y="60" width="30.33" height="30" fill="#a1a1a1"/><rect x="189.98" y="60" width="30.33" height="30" fill="#a1a1a1"/><rect x="250.64" y="60" width="30.33" height="30" fill="#a1a1a1"/><rect x="311.30" y="60" width="30.33" height="30" fill="#a1a1a1"/><rect x="371.96" y="60" width="30.33" height="30" fill="#a1a1a1"/><rect x="432.62" y="60" width="30.33" height="30" fill="#a1a1a1"/><rect x="-22.33" y="90" width="30.33" height="30" fill="#a1a1a1"/><rect x="38.33" y="90" width="30.33" height="30" fill="#a1a1a1"/><rect x="98.99" y="90" width="30.33" height="30" fill="#a1a1a1"/><rect x="159.65" y="90" width="30.33" height="30" fill="#a1a1a1"/><rect x="220.31" y="90" width="30.33" height="30" fill="#a1a1a1"/><rect x="280.97" y="90" width="30.33" height="30" fill="#a1a1a1"/><rect x="341.63" y="90" width="30.33" height="30" fill="#a1a1a1"/><rect x="402.29" y="90" width="30.33" height="30" fill="#a1a1a1"/><rect x="0.5" y="0.5" width="439" height="119" rx="4.5" fill="none" stroke="#111" stroke-width="1"/></svg></div>
<div class="r" style="left:877px;top:331px;width:446px;height:1px;background:#3f3f3f;"></div>
<div class="r" style="left:877px;top:332px;width:446px;height:1px;background:#8a8a8a;"></div>
<svg class="i" style="left:885px;top:339px;" width="9" height="9" viewBox="0 0 9 9"><path d="M0.3 0.8 H8.7 L4.5 8.6Z" fill="#1e1e1e"/></svg>
<span class="t" style="left:898px;top:337px;color:#000;letter-spacing:-0.091px;font-size:12px;">Track Exporter</span>
<svg class="i" style="left:1303px;top:334px;" width="17" height="19" viewBox="0 0 17 19"><path d="M0.5 2.5 L16 18" stroke="#5a5a5a" stroke-width="1"/><path d="M0.5 1.5 L16 17" stroke="#909090" stroke-width="1"/><path d="M5.5 1.5 L16 12" stroke="#5a5a5a" stroke-width="1"/><path d="M5.5 0.5 L16 11" stroke="#909090" stroke-width="1"/><path d="M11 2.5 L16 7.5" stroke="#5a5a5a" stroke-width="1"/><path d="M11 1.5 L16 6.5" stroke="#909090" stroke-width="1"/></svg>
<div class="w" style="left:880px;top:364px;width:438px;height:18px;border-color:#2d2d2d;background:linear-gradient(#a9a9a9,#8b8b8b);border-radius:4px;"></div>
<svg class="i" style="left:884px;top:366px;" width="16" height="16" viewBox="0 0 16 16"><g stroke="#4a2806" stroke-width="2.6" stroke-linecap="round" fill="none"><path d="M2.9 5.3 H9.2"/><path d="M7.8 1.8 L12.4 5.4"/><path d="M1.2 12 L6.4 8.2"/></g><circle cx="10" cy="8.9" r="5.7" fill="#f48a12" stroke="#4a2806" stroke-width="1"/><g stroke="#fba346" stroke-width="1.5" stroke-linecap="round" fill="none"><path d="M2.9 5.3 H9.2"/><path d="M7.8 1.8 L12.4 5.4"/><path d="M1.2 12 L6.4 8.2"/></g><circle cx="10" cy="8.9" r="3.2" fill="#fff"/><circle cx="10" cy="8.9" r="1.95" fill="#2358a8"/></svg>
<span class="t" style="left:1091px;top:369px;color:#000;letter-spacing:-0.065px;">Export</span>
<div class="w" style="left:880px;top:389px;width:438px;height:87px;border-color:#3c3c3c;background:#808080;border-radius:5px;"></div>
<span class="t" style="left:890px;top:402px;color:#000;letter-spacing:0.051px;">Log</span>
<svg class="i" style="left:889px;top:427px;" width="16" height="16" viewBox="0 0 16 16"><defs><radialGradient id="gi" cx="0.45" cy="0.3" r="0.85"><stop offset="0" stop-color="#4d7ab8"/><stop offset="1" stop-color="#173f80"/></radialGradient></defs>
<circle cx="8" cy="8" r="6.6" fill="url(#gi)" stroke="#0a0e1c" stroke-width="1.1"/><circle cx="8" cy="8" r="5.5" fill="none" stroke="#9dbbe2" stroke-width="0.9" opacity="0.85"/>
<text x="8.1" y="12" text-anchor="middle" font-family="'DejaVu Serif','Liberation Serif',serif" font-weight="bold" font-size="11.5" fill="#fff">i</text></svg>
<span class="t" style="left:906px;top:430px;color:#000;letter-spacing:0.172px;">Export completed on 2012-06-16 06:20</span>
<div class="w" style="left:885px;top:453px;width:209px;height:18px;border-color:#2d2d2d;background:linear-gradient(#a9a9a9,#8b8b8b);border-radius:4px;"></div>
<svg class="i" style="left:888px;top:455px;" width="16" height="16" viewBox="0 0 16 16"><path d="M2.6 4.4 L4.4 2.6 L8 6.2 L11.6 2.6 L13.4 4.4 L9.8 8 L13.4 11.6 L11.6 13.4 L8 9.8 L4.4 13.4 L2.6 11.6 L6.2 8Z" fill="#fff" stroke="#1a1a1a" stroke-width="1" stroke-linejoin="round"/></svg>
<span class="t" style="left:975px;top:458px;color:#000;letter-spacing:0.014px;">Clear Log</span>
<div class="w" style="left:1104px;top:453px;width:209px;height:18px;border-color:#2d2d2d;background:linear-gradient(#a9a9a9,#8b8b8b);border-radius:4px;"></div>
<svg class="i" style="left:1107px;top:455px;" width="16" height="16" viewBox="0 0 16 16"><rect x="5.3" y="2.2" width="9" height="9.6" rx="1" fill="#c8b684" stroke="#4a4024" stroke-width="0.9"/><rect x="7.6" y="1" width="4.4" height="2.8" rx="0.8" fill="#ececec" stroke="#444" stroke-width="0.7"/><path d="M1.2 14.6 L6.3 9.5 M6.9 13 V8.9 H2.8" fill="none" stroke="#111" stroke-width="3"/><path d="M1.2 14.6 L6.3 9.5 M6.9 13 V8.9 H2.8" fill="none" stroke="#fff" stroke-width="1.4"/></svg>
<span class="t" style="left:1195px;top:458px;color:#000;letter-spacing:-0.012px;">Copy Log</span>
<div class="r" style="left:1329px;top:58px;width:11px;height:419px;border:1px solid #4a4a4a;border-radius:6.5px;background:linear-gradient(90deg,#5c5c5c,#565656);box-shadow:0 1px 0 rgba(255,255,255,0.08)"></div>
<div class="r" style="left:1329px;top:329px;width:11px;height:146px;border:1px solid #353535;border-radius:6.5px;background:linear-gradient(90deg,#9c9c9c,#7c7c7c)"></div>
<div class="r" style="left:872px;top:486px;width:473px;height:1px;background:#000;"></div>
<div class="r" style="left:872px;top:487px;width:473px;height:178px;background:#353535;"></div>
<div class="r" style="left:872px;top:487px;width:473px;height:1px;background:#4a4a4a;"></div>
<div class="r" style="left:1086px;top:558px;width:43px;height:43px;background:#212121;background-image:repeating-linear-gradient(180deg,rgba(0,0,0,0) 0,rgba(0,0,0,0) 3px,rgba(0,0,0,0.06) 3px,rgba(0,0,0,0.06) 4px,rgba(255,255,255,0.015) 4px,rgba(255,255,255,0.015) 7px)"></div>
<div class="r" style="left:1086px;top:572px;width:43px;height:1px;background:#161616;"></div>
<div class="r" style="left:1086px;top:588px;width:43px;height:1px;background:#131313;"></div>
<div class="r" style="left:872px;top:508px;width:14px;height:15px;background:#2a2a2a;border-radius:0 4px 4px 0"></div>
<svg class="i" style="left:870px;top:508px;" width="16" height="16" viewBox="0 0 16 16"><path d="M7 4.6 H9 V7 H11.4 V9 H9 V11.4 H7 V9 H4.6 V7 H7Z" fill="#6e6e6e"/></svg>
<div class="r" style="left:1331px;top:508px;width:14px;height:15px;background:#2a2a2a;border-radius:4px 0 0 4px"></div>
<svg class="i" style="left:1330px;top:508px;" width="16" height="16" viewBox="0 0 16 16"><path d="M7 4.6 H9 V7 H11.4 V9 H9 V11.4 H7 V9 H4.6 V7 H7Z" fill="#6e6e6e"/></svg>
<div class="r" style="left:872px;top:665px;width:473px;height:1px;background:#858585;"></div>
<div class="r" style="left:872px;top:666px;width:473px;height:25px;background:#686868;"></div>
<div class="w" style="left:880px;top:669px;width:28px;height:18px;border-color:#222222;background:linear-gradient(#565656,#383838);border-radius:4px;"></div>
<svg class="i" style="left:883px;top:671px;" width="16" height="16" viewBox="0 0 16 16"><rect x="1.3" y="1.6" width="13.4" height="12.8" rx="1" fill="#fff" stroke="#1a1a1a" stroke-width="0.8"/><rect x="2.2" y="2.4" width="11.6" height="4.4" fill="#e8a9a4"/><rect x="2.2" y="6.6" width="11.6" height="1.6" fill="#5a4a58"/><rect x="2.2" y="8" width="11.6" height="3" fill="#9c96c8"/><rect x="9.6" y="3.4" width="2" height="2" fill="#fff"/><rect x="2.6" y="12" width="10.8" height="1" fill="#d9d9d9"/><circle cx="3.4" cy="12.5" r="0.9" fill="#e11"/></svg>
<svg class="i" style="left:901px;top:673px;" width="7" height="12" viewBox="0 0 7 12"><path d="M3.5 0.3 L6.8 5 H0.2Z M0.2 7 H6.8 L3.5 11.7Z" fill="#b9b9b9"/></svg>
<svg class="i" style="left:915px;top:671px;" width="16" height="16" viewBox="0 0 16 16"><defs><linearGradient id="gmn" x1="0" y1="0" x2="0" y2="1"><stop offset="0" stop-color="#bdbdbd"/><stop offset="1" stop-color="#a2a2a2"/></linearGradient></defs><circle cx="8.3" cy="8.4" r="4.1" fill="url(#gmn)" stroke="#4a4a4a" stroke-width="1"/><rect x="5.9" y="7.8" width="4.8" height="1.2" fill="#333"/></svg>
<span class="t" style="left:942px;top:674px;color:#000;letter-spacing:0.324px;">View</span>
<span class="t" style="left:980px;top:674px;color:#000;letter-spacing:0.001px;">Image</span>
<div class="w" style="left:1025px;top:669px;width:31px;height:18px;border-color:#222222;background:linear-gradient(#565656,#383838);border-radius:4px 0 0 4px;"></div>
<svg class="i" style="left:1029px;top:671px;" width="16" height="16" viewBox="0 0 16 16"><path d="M2.6 3.8 L5.4 1.2 H13.4 V14.8 H2.6Z" fill="#fff" stroke="#1a1a1a" stroke-width="0.9" stroke-linejoin="round"/><rect x="3.6" y="3.4" width="8.8" height="5.2" fill="#e8a9a4"/><rect x="3.6" y="8.2" width="8.8" height="1.6" fill="#54445a"/><rect x="3.6" y="9.6" width="8.8" height="4" fill="#9c96c8"/><rect x="9" y="4" width="2" height="2" fill="#fff"/><path d="M2.6 3.8 H5.4 V1.2Z" fill="#ddd" stroke="#1a1a1a" stroke-width="0.6"/></svg>
<div class="w" style="left:1057px;top:669px;width:118px;height:18px;border-color:#2d2d2d;background:linear-gradient(#999,#b1b1b1);border-radius:0;"></div>
<span class="t" style="left:1061px;top:674px;color:#000;letter-spacing:0.048px;">city_concrete_dark.pn</span>
<div class="w" style="left:1176px;top:669px;width:19px;height:18px;border-color:#2d2d2d;background:linear-gradient(#a9a9a9,#8b8b8b);border-radius:0;"></div>
<span class="t" style="left:1183px;top:674px;color:#000;letter-spacing:0.307px;">F</span>
<div class="w" style="left:1196px;top:669px;width:19px;height:18px;border-color:#2d2d2d;background:linear-gradient(#a9a9a9,#8b8b8b);border-radius:0;"></div>
<svg class="i" style="left:1200px;top:671px;" width="16" height="16" viewBox="0 0 16 16"><path d="M6.8 2.4 H9.2 V6.8 H13.6 V9.2 H9.2 V13.6 H6.8 V9.2 H2.4 V6.8 H6.8Z" fill="#fff" stroke="#1a1a1a" stroke-width="1" stroke-linejoin="round"/></svg>
<div class="w" style="left:1216px;top:669px;width:18px;height:18px;border-color:#2d2d2d;background:linear-gradient(#a9a9a9,#8b8b8b);border-radius:0 4px 4px 0;"></div>
<svg class="i" style="left:1218px;top:671px;" width="16" height="16" viewBox="0 0 16 16"><path d="M2.6 4.4 L4.4 2.6 L8 6.2 L11.6 2.6 L13.4 4.4 L9.8 8 L13.4 11.6 L11.6 13.4 L8 9.8 L4.4 13.4 L2.6 11.6 L6.2 8Z" fill="#fff" stroke="#1a1a1a" stroke-width="1" stroke-linejoin="round"/></svg>
<div class="w" style="left:1242px;top:669px;width:18px;height:18px;border-color:#2d2d2d;background:linear-gradient(#a9a9a9,#8b8b8b);border-radius:4px;"></div>
<svg class="i" style="left:1244px;top:671px;" width="16" height="16" viewBox="0 0 16 16"><path d="M1.4 14.8 L6 10.2" stroke="#2a2a2a" stroke-width="2.8" stroke-linecap="round"/><path d="M1.4 14.8 L6 10.2" stroke="#e8e8e8" stroke-width="1.3" stroke-linecap="round"/><path d="M9.8 0.8 L15.2 6.2 L13.4 7.6 L12.4 7 L10.6 9 L11 12.4 L9.4 13.6 L2.6 6.8 L3.8 5.2 L7.2 5.6 L9.2 3.8 L8.4 2.6Z" fill="#e6e6e6" stroke="#202020" stroke-width="1" stroke-linejoin="round"/><path d="M9.4 4.4 L11.8 6.8 M5.4 6.8 L9.4 10.8" stroke="#8c8c8c" stroke-width="0.9"/></svg>
<div class="w" style="left:1272px;top:669px;width:18px;height:18px;border-color:#2d2d2d;background:linear-gradient(#a9a9a9,#8b8b8b);border-radius:4px;"></div>
<svg class="i" style="left:1274px;top:671px;" width="16" height="16" viewBox="0 0 16 16"><path d="M1.6 2.4 Q1.6 1.4 2.6 1.4 H14.2 L1.6 14Z" fill="#f4f4f4" stroke="#3a3a3a" stroke-width="0.6"/><g fill="#962616"><rect x="2.6" y="2.4" width="2.8" height="2.8"/><rect x="8.2" y="2.4" width="2.8" height="2.4" opacity="0.75"/><rect x="5.4" y="5.2" width="2.8" height="2.8" opacity="0.85"/><rect x="2.6" y="8" width="2.8" height="2.8" opacity="0.8"/></g><path d="M14.6 2.6 L9.6 9.4" stroke="#6a1a06" stroke-width="3.4" stroke-linecap="round"/><path d="M14.6 2.6 L9.6 9.4" stroke="#f25a1e" stroke-width="2.1" stroke-linecap="round"/><path d="M10 8.6 L8.6 10.6" stroke="#e4ebf8" stroke-width="2.8"/><path d="M8.6 10.2 Q5.6 10.6 3 14.4 Q7.4 15 9.8 11.4Z" fill="#cf9068" stroke="#5a3a24" stroke-width="0.8"/></svg>
<div class="w" style="left:1297px;top:669px;width:18px;height:18px;border-color:#1c1c1c;background:linear-gradient(#658fd1,#4771b3);border-radius:4px 0 0 4px;"></div>
<svg class="i" style="left:1299px;top:671px;" width="16" height="16" viewBox="0 0 16 16"><rect x="1.8" y="1.8" width="12.4" height="12.4" fill="#fff" stroke="#1a1a1a" stroke-width="1.2"/><rect x="3" y="3" width="2.5" height="2.5" fill="#1a7aa6"/><rect x="8" y="3" width="2.7" height="2.5" fill="#c41240"/><rect x="5.4" y="5.6" width="2.7" height="2.6" fill="#c41240"/><rect x="10.6" y="5.6" width="2.4" height="2.6" fill="#5f9a86"/><rect x="3" y="8.2" width="2.5" height="2.6" fill="#dc8c14"/><rect x="8" y="8.2" width="2.7" height="2.6" fill="#8f1230"/><rect x="5.4" y="10.8" width="2.7" height="2.3" fill="#d89a62"/><rect x="10.6" y="10.8" width="2.4" height="2.3" fill="#8fb42c"/></svg>
<div class="w" style="left:1316px;top:669px;width:19px;height:18px;border-color:#222222;background:linear-gradient(#565656,#383838);border-radius:0;"></div>
<svg class="i" style="left:1318px;top:671px;" width="16" height="16" viewBox="0 0 16 16"><path d="M2 2 H14 L2 14Z" fill="#c9c9c9"/><path d="M14 2 V14 H2Z" fill="#3d3d3d"/><rect x="3" y="3" width="2.5" height="2.5" fill="#1a7aa6"/><rect x="8" y="3" width="2.7" height="2.5" fill="#a8204a"/><rect x="5.4" y="5.6" width="2.7" height="2.6" fill="#a8204a"/><rect x="3" y="8.2" width="2.5" height="2.6" fill="#c0841a"/></svg>
<div class="w" style="left:1336px;top:669px;width:19px;height:18px;border-color:#222222;background:linear-gradient(#565656,#383838);border-radius:0;"></div>
<svg class="i" style="left:1338px;top:671px;" width="16" height="16" viewBox="0 0 16 16"><path d="M2 2 H14 V14 H2Z" fill="#b5b5b5" stroke="#2a2a2a" stroke-width="1"/><path d="M14 6 V14 H6Z" fill="#3a3a3a"/></svg>
<div class="r" style="left:872px;top:29px;width:1px;height:457px;background:rgba(255,255,255,0.10);"></div>
<div class="r" style="left:872px;top:488px;width:1px;height:203px;background:rgba(255,255,255,0.12);"></div>
<svg class="i" style="left:1333px;top:1px;" width="12" height="12" viewBox="0 0 12 12"><path d="M1.2 0 L12 10.8" stroke="#9a9a9a" stroke-width="1.0"/><path d="M3.2 0 L12 8.8" stroke="#1c1c1c" stroke-width="1.2"/><path d="M5.2 0 L12 6.8" stroke="#9a9a9a" stroke-width="1.0"/><path d="M7.2 0 L12 4.8" stroke="#1c1c1c" stroke-width="1.2"/><path d="M9.2 0 L12 2.8000000000000007" stroke="#9a9a9a" stroke-width="1.0"/><path d="M10.8 0 L12 1.1999999999999993" stroke="#1c1c1c" stroke-width="1.0"/></svg>
<svg class="i" style="left:-5px;top:15px;" width="12" height="12" viewBox="0 0 12 12"><path d="M0 0.3 L11.7 12" stroke="#1c1c1c" stroke-width="1.2"/><path d="M0 2.3 L9.7 12" stroke="#9a9a9a" stroke-width="1.0"/><path d="M0 4.3 L7.7 12" stroke="#1c1c1c" stroke-width="1.2"/><path d="M0 6.3 L5.7 12" stroke="#9a9a9a" stroke-width="1.0"/><path d="M0 8.3 L3.6999999999999993 12" stroke="#1c1c1c" stroke-width="1.2"/><path d="M0 10.3 L1.6999999999999993 12" stroke="#9a9a9a" stroke-width="1.0"/></svg>
<svg class="i" style="left:-5px;top:679px;" width="12" height="12" viewBox="0 0 12 12"><path d="M0 0.3 L11.7 12" stroke="#1c1c1c" stroke-width="1.2"/><path d="M0 2.3 L9.7 12" stroke="#9a9a9a" stroke-width="1.0"/><path d="M0 4.3 L7.7 12" stroke="#1c1c1c" stroke-width="1.2"/><path d="M0 6.3 L5.7 12" stroke="#9a9a9a" stroke-width="1.0"/><path d="M0 8.3 L3.6999999999999993 12" stroke="#1c1c1c" stroke-width="1.2"/><path d="M0 10.3 L1.6999999999999993 12" stroke="#9a9a9a" stroke-width="1.0"/></svg>
<svg class="i" style="left:1333px;top:28px;" width="12" height="12" viewBox="0 0 12 12"><path d="M1.2 0 L12 10.8" stroke="#9a9a9a" stroke-width="1.0"/><path d="M3.2 0 L12 8.8" stroke="#1c1c1c" stroke-width="1.2"/><path d="M5.2 0 L12 6.8" stroke="#9a9a9a" stroke-width="1.0"/><path d="M7.2 0 L12 4.8" stroke="#1c1c1c" stroke-width="1.2"/><path d="M9.2 0 L12 2.8000000000000007" stroke="#9a9a9a" stroke-width="1.0"/><path d="M10.8 0 L12 1.1999999999999993" stroke="#1c1c1c" stroke-width="1.0"/></svg>
<svg class="i" style="left:872px;top:474px;" width="12" height="12" viewBox="0 0 12 12"><path d="M0 0.3 L11.7 12" stroke="#1c1c1c" stroke-width="1.2"/><path d="M0 2.3 L9.7 12" stroke="#9a9a9a" stroke-width="1.0"/><path d="M0 4.3 L7.7 12" stroke="#1c1c1c" stroke-width="1.2"/><path d="M0 6.3 L5.7 12" stroke="#9a9a9a" stroke-width="1.0"/><path d="M0 8.3 L3.6999999999999993 12" stroke="#1c1c1c" stroke-width="1.2"/><path d="M0 10.3 L1.6999999999999993 12" stroke="#9a9a9a" stroke-width="1.0"/></svg>
<svg class="i" style="left:1333px;top:487px;" width="12" height="12" viewBox="0 0 12 12"><path d="M1.2 0 L12 10.8" stroke="#9a9a9a" stroke-width="1.0"/><path d="M3.2 0 L12 8.8" stroke="#1c1c1c" stroke-width="1.2"/><path d="M5.2 0 L12 6.8" stroke="#9a9a9a" stroke-width="1.0"/><path d="M7.2 0 L12 4.8" stroke="#1c1c1c" stroke-width="1.2"/><path d="M9.2 0 L12 2.8000000000000007" stroke="#9a9a9a" stroke-width="1.0"/><path d="M10.8 0 L12 1.1999999999999993" stroke="#1c1c1c" stroke-width="1.0"/></svg>
<svg class="i" style="left:872px;top:679px;" width="12" height="12" viewBox="0 0 12 12"><path d="M0 0.3 L11.7 12" stroke="#1c1c1c" stroke-width="1.2"/><path d="M0 2.3 L9.7 12" stroke="#9a9a9a" stroke-width="1.0"/><path d="M0 4.3 L7.7 12" stroke="#1c1c1c" stroke-width="1.2"/><path d="M0 6.3 L5.7 12" stroke="#9a9a9a" stroke-width="1.0"/><path d="M0 8.3 L3.6999999999999993 12" stroke="#1c1c1c" stroke-width="1.2"/><path d="M0 10.3 L1.6999999999999993 12" stroke="#9a9a9a" stroke-width="1.0"/></svg>
<div class="r" style="left:874px;top:487px;width:1px;height:1px;background:#e8e8e8;"></div>
<div class="r" style="left:878px;top:487px;width:1px;height:1px;background:#e8e8e8;"></div>
<div class="r" style="left:882px;top:487px;width:1px;height:1px;background:#e8e8e8;"></div>
<div class="r" style="left:1345px;top:0px;width:8px;height:699px;background:#8a98d8;background:linear-gradient(180deg,#a6b0e5 0,#8a98d8 70px)"></div>
<div class="r" style="left:1345px;top:0px;width:1px;height:691px;background:#3c3c4c;"></div>
<div class="r" style="left:1346px;top:0px;width:1px;height:692px;background:#e4e8fa;"></div>
<div class="r" style="left:1352px;top:0px;width:1px;height:699px;background:#f2f4fd;"></div>
<div class="r" style="left:1351px;top:0px;width:1px;height:699px;background:#b9c2ee;"></div>
<div class="r" style="left:0px;top:691px;width:1347px;height:8px;background:#8d9ada;"></div>
<div class="r" style="left:0px;top:691px;width:1346px;height:1px;background:#555a78;"></div>
<div class="r" style="left:0px;top:692px;width:1347px;height:1px;background:#e4e8fa;"></div>
<div class="r" style="left:0px;top:697px;width:1353px;height:1px;background:#f2f4fd;"></div>
<div class="r" style="left:0px;top:698px;width:1353px;height:1px;background:#000;"></div>
<svg class="i" style="left:1341px;top:687px;" width="12" height="12" viewBox="0 0 12 12"><defs><clipPath id="cl"><path d="M4 0 H12 V12 H0 V4 H4Z"/></clipPath></defs><g clip-path="url(#cl)"><rect width="12" height="12" fill="#000"/><path d="M0 0 H12 V5 A6 6 0 0 1 6 11 H0Z" fill="#f2f4fd"/><path d="M0 0 H11 V5 A5 5 0 0 1 6 10 H0Z" fill="#8d9ada"/><path d="M0 0 H10.2 V5 A4.2 4.2 0 0 1 6 9.2 H0Z" fill="#8d9ada"/><path d="M0 0 H6 V4 A2 2 0 0 1 4 6 H0Z" fill="#e4e8fa"/><path d="M0 0 H5 V4 A1 1 0 0 1 4 5 H0Z" fill="#4a4e66"/></g></svg>
</div>
</body></html>
